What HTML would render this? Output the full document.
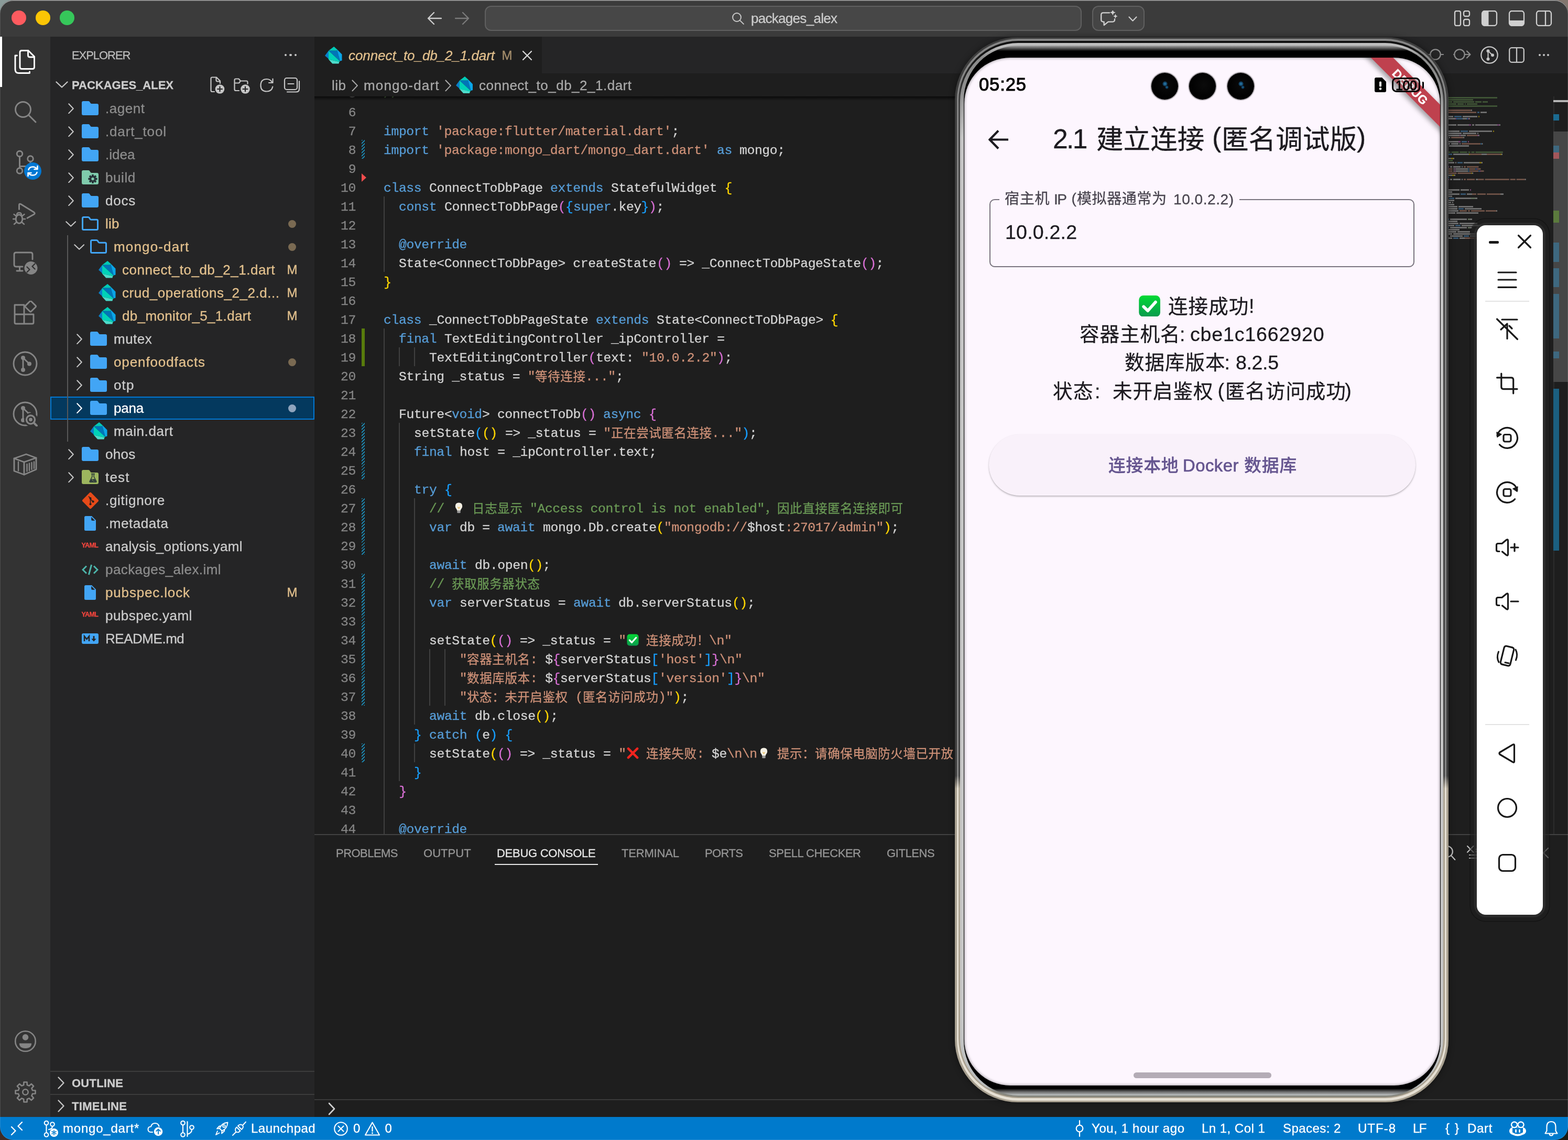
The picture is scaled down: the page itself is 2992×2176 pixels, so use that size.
<!DOCTYPE html><html><head><meta charset="utf-8"><title>packages_alex</title><style>
html,body{margin:0;padding:0;background:#1a1a1a;}
body{width:2992px;height:2176px;overflow:hidden;font-family:"Liberation Sans",sans-serif;}
#root{position:relative;width:2992px;height:2176px;overflow:hidden;background:#1e1e1e;}
#root div,#root span,#root svg{position:absolute;display:block;}
#root span{white-space:pre;-webkit-text-stroke:0.3px;}
#win,.ov{will-change:transform;}
#root svg.t{overflow:visible;}
#root svg.m{font-family:'Liberation Mono',monospace;}
#root text{fill:currentColor;stroke:currentColor;stroke-width:.3px;white-space:pre;}
#win{left:0;top:0;width:2992px;height:2176px;border-radius:25px 25px 25px 25px;overflow:hidden;}
#wbd{left:0;top:0;width:2992px;height:2176px;border-radius:25px;box-shadow:inset 0 0 0 1px rgba(255,255,255,0.13);}
#wtop{left:0;top:0;width:2992px;height:120px;border-radius:25px 25px 0 0;box-shadow:inset 0 1.6px 0 #a2a2a2;pointer-events:none;}
</style></head><body><div id="root"><div style="left:0;top:0;width:40px;height:40px;background:#8a9b99"></div><div style="left:2952px;top:0;width:40px;height:40px;background:#83766e"></div><div style="left:0;top:2136px;width:40px;height:40px;background:#3e2c26"></div><div style="left:2952px;top:2136px;width:40px;height:40px;background:#1a1a14"></div><div id="win"><div style="left:0px;top:0px;width:2992px;height:70px;background:#3b3b3b;"></div><div style="left:22.2px;top:20px;width:28px;height:28px;background:#fe5b5f;border-radius:50%;"></div><div style="left:68px;top:20px;width:28px;height:28px;background:#fbc505;border-radius:50%;"></div><div style="left:114px;top:20px;width:28px;height:28px;background:#36c75a;border-radius:50%;"></div><svg style="left:815px;top:22px;" width="28" height="26" viewBox="0 0 28 26"><path d="M13 2L2 13 13 24M2.5 13H27" fill="none" stroke="#cccccc" stroke-width="2.4" stroke-linecap="round" stroke-linejoin="round" /></svg><svg style="left:868px;top:22px;" width="28" height="26" viewBox="0 0 28 26"><path d="M15 2L26 13 15 24M25.5 13H1" fill="none" stroke="#7a7a7a" stroke-width="2.4" stroke-linecap="round" stroke-linejoin="round" /></svg><div style="left:925px;top:11px;width:1139px;height:48px;background:#474747;border:2px solid #606060;border-radius:12px;box-sizing:border-box;"></div><svg style="left:1396px;top:23px;" width="25" height="25" viewBox="0 0 30 30"><circle cx="12" cy="12" r="9.5" fill="none" stroke="#c8c8c8" stroke-width="2.4" stroke-linecap="round" stroke-linejoin="round" /><path d="M19 19L27.5 27.5" fill="none" stroke="#c8c8c8" stroke-width="2.4" stroke-linecap="round" stroke-linejoin="round" /></svg><svg class="t" style="left:1433px;top:17px;color:#cccccc;" width="165" height="36"><text y="27.01" font-size="26" textLength="165">packages_alex</text></svg><div style="left:2084px;top:11px;width:100px;height:48px;background:#454545;border:2px solid #606060;border-radius:12px;box-sizing:border-box;"></div><svg style="left:2099px;top:20px;" width="36" height="30" viewBox="0 0 36 30"><path d="M18 4.400H6.200Q2.200 4.400 2.200 8.400V17.600Q2.200 21.600 6.200 21.600H7.600V28L15.600 21.600H24Q28 21.600 28 17.600V16.500" fill="none" stroke="#d0d0d0" stroke-width="2.3" stroke-linecap="round" stroke-linejoin="round" /><path d="M24.3 -1.6000000000000005L25.92 2.1799999999999997 29.700000000000003 3.8 25.92 5.42 24.3 9.2 22.68 5.42 18.9 3.8 22.68 2.1799999999999997Z" fill="#d0d0d0"/><path d="M29.4 6.6L30.72 9.68 33.8 11 30.72 12.32 29.4 15.4 28.08 12.32 25.0 11 28.08 9.68Z" fill="#d0d0d0"/></svg><svg style="left:2151px;top:29.5px;" width="20" height="12" viewBox="0 0 20 12"><path d="M3.500 2.500L10.500 9.700 17.500 2.500" fill="none" stroke="#cccccc" stroke-width="2.2" stroke-linecap="round" stroke-linejoin="round" /></svg><svg style="left:2774px;top:20px;" width="32" height="30" viewBox="0 0 32 30"><rect x="2" y="1" width="11" height="28" rx="3" fill="none" stroke="#d0d0d0" stroke-width="2.3" stroke-linecap="round" stroke-linejoin="round" /><rect x="19" y="1" width="11" height="10" rx="3" fill="none" stroke="#d0d0d0" stroke-width="2.3" stroke-linecap="round" stroke-linejoin="round" /><rect x="19" y="17" width="11" height="12" rx="3" fill="none" stroke="#d0d0d0" stroke-width="2.3" stroke-linecap="round" stroke-linejoin="round" /></svg><svg style="left:2826px;top:20px;" width="32" height="30" viewBox="0 0 32 30"><rect x="2" y="1" width="28" height="28" rx="5" fill="none" stroke="#d0d0d0" stroke-width="2.3" stroke-linecap="round" stroke-linejoin="round" /><path d="M6.500 1H14.500V29H6.500Q2 29 2 24.500V5.500Q2 1 6.500 1Z" fill="#d0d0d0"/></svg><svg style="left:2878px;top:20px;" width="32" height="30" viewBox="0 0 32 30"><rect x="2" y="1" width="28" height="28" rx="5" fill="none" stroke="#d0d0d0" stroke-width="2.3" stroke-linecap="round" stroke-linejoin="round" /><path d="M2 19H30V24.500Q30 29 25.500 29H6.500Q2 29 2 24.500Z" fill="#d0d0d0"/></svg><svg style="left:2930px;top:20px;" width="32" height="30" viewBox="0 0 32 30"><rect x="2" y="1" width="28" height="28" rx="5" fill="none" stroke="#d0d0d0" stroke-width="2.3" stroke-linecap="round" stroke-linejoin="round" /><path d="M19 1V29" fill="none" stroke="#d0d0d0" stroke-width="2.3" stroke-linecap="round" stroke-linejoin="round" /></svg><div style="left:600px;top:70px;width:2392px;height:70px;background:#252526;"></div><div style="left:600px;top:70px;width:434px;height:70px;background:#1e1e1e;"></div><svg style="left:620px;top:89px;" width="32.5" height="32.5" viewBox="0 0 32.5 32.5"><path d="M17.2 0L23.5 5.5 23.4 7.8 7 7.8Z" fill="#01c9b6"/><path d="M7 7.7L0 17.2 6 22.5 7.1 24.8Z" fill="#0a7fc8"/><path d="M7 7.7L23.6 7.7 28.9 27 28.8 28Z" fill="#0175b8"/><path d="M23.5 5.5L32.5 14.7 32.5 26.4 29.3 27.5 28.8 27 23.5 7.7Z" fill="#0aa5e8"/><path d="M7 7.7L7 24.6 27.4 29.1 28.8 27.9Z" fill="#00d2b8"/><path d="M7 24.5L27.4 29 26.4 32.5 14.3 32.5Z" fill="#4ddccb"/></svg><svg class="t" style="left:665px;top:84px;color:#e2c08d;" width="279" height="44"><text y="31.01" font-size="26" textLength="279" font-style="italic">connect_to_db_2_1.dart</text></svg><span style="left:957.5px;top:84px;font-size:24px;line-height:44px;color:#a58e6c;">M</span><svg style="left:996px;top:96px;" width="20" height="20" viewBox="0 0 20 20"><path d="M2 2L18 18M18 2L2 18" fill="none" stroke="#d8d8d8" stroke-width="2.3" stroke-linecap="round" stroke-linejoin="round" /></svg><svg style="left:2719.3px;top:86px;" width="40" height="36" viewBox="0 0 40 36"><circle cx="20" cy="18" r="9.7" fill="none" stroke="#8c8c8c" stroke-width="2.2" stroke-linecap="round" stroke-linejoin="round" /><path d="M2 18H10.300M29.700 18H35" fill="none" stroke="#8c8c8c" stroke-width="2.2" stroke-linecap="round" stroke-linejoin="round" /></svg><svg style="left:2765px;top:86px;" width="44" height="36" viewBox="0 0 44 36"><circle cx="20" cy="18" r="9.7" fill="none" stroke="#8c8c8c" stroke-width="2.2" stroke-linecap="round" stroke-linejoin="round" /><path d="M9 18H10.300M29.700 18H40M34 11.500L40.500 18 34 24.500" fill="none" stroke="#8c8c8c" stroke-width="2.2" stroke-linecap="round" stroke-linejoin="round" /></svg><svg style="left:2821px;top:84px;" width="42" height="42" viewBox="0 0 42 42"><circle cx="21" cy="21" r="15.7" fill="none" stroke="#c5c5c5" stroke-width="2.2" stroke-linecap="round" stroke-linejoin="round" /><circle cx="18.500" cy="13.300" r="3" fill="#c5c5c5"/><circle cx="18.500" cy="28.700" r="3" fill="#c5c5c5"/><circle cx="27" cy="21.300" r="3" fill="#c5c5c5"/><path d="M18.500 13.300V28.700M18.500 13.300L27 21.300" fill="none" stroke="#c5c5c5" stroke-width="2" stroke-linecap="round" stroke-linejoin="round" /></svg><svg style="left:2878px;top:89px;" width="32" height="32" viewBox="0 0 32 32"><rect x="2.2" y="2.2" width="27.6" height="27.6" rx="4.500" fill="none" stroke="#c5c5c5" stroke-width="2.3" stroke-linecap="round" stroke-linejoin="round" /><path d="M16 2.200V29.800" fill="none" stroke="#c5c5c5" stroke-width="2.3" stroke-linecap="round" stroke-linejoin="round" /></svg><div style="left:2935.7px;top:102.7px;width:4.6px;height:4.6px;background:#c5c5c5;border-radius:50%;"></div><div style="left:2943.7px;top:102.7px;width:4.6px;height:4.6px;background:#c5c5c5;border-radius:50%;"></div><div style="left:2951.7px;top:102.7px;width:4.6px;height:4.6px;background:#c5c5c5;border-radius:50%;"></div><div style="left:600px;top:140px;width:2392px;height:1452px;background:#1e1e1e;"></div><svg class="t" style="left:632.5px;top:141px;color:#a9a9a9;" width="27" height="44"><text y="31.01" font-size="26" textLength="27">lib</text></svg><svg style="left:671px;top:152px;" width="12.35" height="22.8" viewBox="0 0 13 24"><path d="M1.5 1.5L11.5 12 1.5 22.5" fill="none" stroke="#a9a9a9" stroke-width="2.2" stroke-linecap="round" stroke-linejoin="round"  /></svg><svg class="t" style="left:693.5px;top:141px;color:#a9a9a9;" width="143.5" height="44"><text y="31.01" font-size="26" textLength="143.5">mongo-dart</text></svg><svg style="left:848.5px;top:152px;" width="12.35" height="22.8" viewBox="0 0 13 24"><path d="M1.5 1.5L11.5 12 1.5 22.5" fill="none" stroke="#a9a9a9" stroke-width="2.2" stroke-linecap="round" stroke-linejoin="round"  /></svg><svg style="left:870px;top:146px;" width="32" height="32" viewBox="0 0 32.5 32.5"><path d="M17.2 0L23.5 5.5 23.4 7.8 7 7.8Z" fill="#01c9b6"/><path d="M7 7.7L0 17.2 6 22.5 7.1 24.8Z" fill="#0a7fc8"/><path d="M7 7.7L23.6 7.7 28.9 27 28.8 28Z" fill="#0175b8"/><path d="M23.5 5.5L32.5 14.7 32.5 26.4 29.3 27.5 28.8 27 23.5 7.7Z" fill="#0aa5e8"/><path d="M7 7.7L7 24.6 27.4 29.1 28.8 27.9Z" fill="#00d2b8"/><path d="M7 24.5L27.4 29 26.4 32.5 14.3 32.5Z" fill="#4ddccb"/></svg><svg class="t" style="left:914px;top:141px;color:#a9a9a9;" width="291" height="44"><text y="31.01" font-size="26" textLength="291">connect_to_db_2_1.dart</text></svg><div style="left:600px;top:184px;width:2392px;height:1408px;overflow:hidden"><div style="left:-600px;top:-184px;width:2992px;height:2176px"><div style="left:690px;top:267px;width:6px;height:36px;background:repeating-linear-gradient(135deg,#1b81a8 0 2px,#1e1e1e 2px 4.2px);"></div><div style="left:690px;top:807px;width:6px;height:108px;background:repeating-linear-gradient(135deg,#1b81a8 0 2px,#1e1e1e 2px 4.2px);"></div><div style="left:690px;top:951px;width:6px;height:108px;background:repeating-linear-gradient(135deg,#1b81a8 0 2px,#1e1e1e 2px 4.2px);"></div><div style="left:690px;top:1095px;width:6px;height:252px;background:repeating-linear-gradient(135deg,#1b81a8 0 2px,#1e1e1e 2px 4.2px);"></div><div style="left:690px;top:1419px;width:6px;height:36px;background:repeating-linear-gradient(135deg,#1b81a8 0 2px,#1e1e1e 2px 4.2px);"></div><div style="left:690px;top:627px;width:6px;height:72px;background:#587c0c;"></div><svg style="left:690px;top:331px;" width="10" height="16" viewBox="0 0 10 16"><path d="M0 0L9 8 0 16Z" fill="#f14c4c"/></svg><div style="left:732px;top:375px;width:2px;height:144px;background:#404040;"></div><div style="left:732px;top:627px;width:2px;height:972px;background:#404040;"></div><div style="left:761px;top:663px;width:2px;height:36px;background:#404040;"></div><div style="left:790px;top:663px;width:2px;height:36px;background:#404040;"></div><div style="left:761px;top:807px;width:2px;height:684px;background:#404040;"></div><div style="left:790px;top:951px;width:2px;height:432px;background:#404040;"></div><div style="left:790px;top:1419px;width:2px;height:36px;background:#404040;"></div><div style="left:819px;top:1239px;width:2px;height:108px;background:#404040;"></div><div style="left:848px;top:1239px;width:2px;height:108px;background:#404040;"></div><span style="left:664.86px;top:160.5px;font-size:24.7px;line-height:36px;color:#858585;font-family:'Liberation Mono',monospace;">5</span><span style="left:664.86px;top:196.5px;font-size:24.7px;line-height:36px;color:#858585;font-family:'Liberation Mono',monospace;">6</span><span style="left:664.86px;top:232.5px;font-size:24.7px;line-height:36px;color:#858585;font-family:'Liberation Mono',monospace;">7</span><span style="left:664.86px;top:268.5px;font-size:24.7px;line-height:36px;color:#858585;font-family:'Liberation Mono',monospace;">8</span><span style="left:664.86px;top:304.5px;font-size:24.7px;line-height:36px;color:#858585;font-family:'Liberation Mono',monospace;">9</span><svg class="t m" style="left:650.41px;top:340.5px;color:#858585;" width="29.27" height="36"><text y="24.58" font-size="24.7" textLength="29.27">10</text></svg><svg class="t m" style="left:650.41px;top:376.5px;color:#858585;" width="29.27" height="36"><text y="24.58" font-size="24.7" textLength="29.27">11</text></svg><svg class="t m" style="left:650.41px;top:412.5px;color:#858585;" width="29.27" height="36"><text y="24.58" font-size="24.7" textLength="29.27">12</text></svg><svg class="t m" style="left:650.41px;top:448.5px;color:#858585;" width="29.27" height="36"><text y="24.58" font-size="24.7" textLength="29.27">13</text></svg><svg class="t m" style="left:650.41px;top:484.5px;color:#858585;" width="29.27" height="36"><text y="24.58" font-size="24.7" textLength="29.27">14</text></svg><svg class="t m" style="left:650.41px;top:520.5px;color:#858585;" width="29.27" height="36"><text y="24.58" font-size="24.7" textLength="29.27">15</text></svg><svg class="t m" style="left:650.41px;top:556.5px;color:#858585;" width="29.27" height="36"><text y="24.58" font-size="24.7" textLength="29.27">16</text></svg><svg class="t m" style="left:650.41px;top:592.5px;color:#858585;" width="29.27" height="36"><text y="24.58" font-size="24.7" textLength="29.27">17</text></svg><svg class="t m" style="left:650.41px;top:628.5px;color:#858585;" width="29.27" height="36"><text y="24.58" font-size="24.7" textLength="29.27">18</text></svg><svg class="t m" style="left:650.41px;top:664.5px;color:#858585;" width="29.27" height="36"><text y="24.58" font-size="24.7" textLength="29.27">19</text></svg><svg class="t m" style="left:650.41px;top:700.5px;color:#858585;" width="29.27" height="36"><text y="24.58" font-size="24.7" textLength="29.27">20</text></svg><svg class="t m" style="left:650.41px;top:736.5px;color:#858585;" width="29.27" height="36"><text y="24.58" font-size="24.7" textLength="29.27">21</text></svg><svg class="t m" style="left:650.41px;top:772.5px;color:#858585;" width="29.27" height="36"><text y="24.58" font-size="24.7" textLength="29.27">22</text></svg><svg class="t m" style="left:650.41px;top:808.5px;color:#858585;" width="29.27" height="36"><text y="24.58" font-size="24.7" textLength="29.27">23</text></svg><svg class="t m" style="left:650.41px;top:844.5px;color:#858585;" width="29.27" height="36"><text y="24.58" font-size="24.7" textLength="29.27">24</text></svg><svg class="t m" style="left:650.41px;top:880.5px;color:#858585;" width="29.27" height="36"><text y="24.58" font-size="24.7" textLength="29.27">25</text></svg><svg class="t m" style="left:650.41px;top:916.5px;color:#858585;" width="29.27" height="36"><text y="24.58" font-size="24.7" textLength="29.27">26</text></svg><svg class="t m" style="left:650.41px;top:952.5px;color:#858585;" width="29.27" height="36"><text y="24.58" font-size="24.7" textLength="29.27">27</text></svg><svg class="t m" style="left:650.41px;top:988.5px;color:#858585;" width="29.27" height="36"><text y="24.58" font-size="24.7" textLength="29.27">28</text></svg><svg class="t m" style="left:650.41px;top:1024.5px;color:#858585;" width="29.27" height="36"><text y="24.58" font-size="24.7" textLength="29.27">29</text></svg><svg class="t m" style="left:650.41px;top:1060.5px;color:#858585;" width="29.27" height="36"><text y="24.58" font-size="24.7" textLength="29.27">30</text></svg><svg class="t m" style="left:650.41px;top:1096.5px;color:#858585;" width="29.27" height="36"><text y="24.58" font-size="24.7" textLength="29.27">31</text></svg><svg class="t m" style="left:650.41px;top:1132.5px;color:#858585;" width="29.27" height="36"><text y="24.58" font-size="24.7" textLength="29.27">32</text></svg><svg class="t m" style="left:650.41px;top:1168.5px;color:#858585;" width="29.27" height="36"><text y="24.58" font-size="24.7" textLength="29.27">33</text></svg><svg class="t m" style="left:650.41px;top:1204.5px;color:#858585;" width="29.27" height="36"><text y="24.58" font-size="24.7" textLength="29.27">34</text></svg><svg class="t m" style="left:650.41px;top:1240.5px;color:#858585;" width="29.27" height="36"><text y="24.58" font-size="24.7" textLength="29.27">35</text></svg><svg class="t m" style="left:650.41px;top:1276.5px;color:#858585;" width="29.27" height="36"><text y="24.58" font-size="24.7" textLength="29.27">36</text></svg><svg class="t m" style="left:650.41px;top:1312.5px;color:#858585;" width="29.27" height="36"><text y="24.58" font-size="24.7" textLength="29.27">37</text></svg><svg class="t m" style="left:650.41px;top:1348.5px;color:#858585;" width="29.27" height="36"><text y="24.58" font-size="24.7" textLength="29.27">38</text></svg><svg class="t m" style="left:650.41px;top:1384.5px;color:#858585;" width="29.27" height="36"><text y="24.58" font-size="24.7" textLength="29.27">39</text></svg><svg class="t m" style="left:650.41px;top:1420.5px;color:#858585;" width="29.27" height="36"><text y="24.58" font-size="24.7" textLength="29.27">40</text></svg><svg class="t m" style="left:650.41px;top:1456.5px;color:#858585;" width="29.27" height="36"><text y="24.58" font-size="24.7" textLength="29.27">41</text></svg><svg class="t m" style="left:650.41px;top:1492.5px;color:#858585;" width="29.27" height="36"><text y="24.58" font-size="24.7" textLength="29.27">42</text></svg><svg class="t m" style="left:650.41px;top:1528.5px;color:#858585;" width="29.27" height="36"><text y="24.58" font-size="24.7" textLength="29.27">43</text></svg><svg class="t m" style="left:650.41px;top:1564.5px;color:#858585;" width="29.27" height="36"><text y="24.58" font-size="24.7" textLength="29.27">44</text></svg><svg class="t m" style="left:732.3px;top:160.5px;color:#6a9955;" width="910.72" height="36"><text y="24.58" font-size="24.7" textLength="910.72">// ============================================================</text></svg><svg class="t m" style="left:732.3px;top:232.5px;color:#569cd6;" width="87.07" height="36"><text y="24.58" font-size="24.7" textLength="87.07">import</text></svg><svg class="t m" style="left:833.45px;top:232.5px;color:#ce9178;" width="448.32" height="36"><text y="24.58" font-size="24.7" textLength="448.32">'package:flutter/material.dart'</text></svg><span style="left:1281.4px;top:232.5px;font-size:24.7px;line-height:36px;color:#d4d4d4;font-family:'Liberation Mono',monospace;">;</span><svg class="t m" style="left:732.3px;top:268.5px;color:#569cd6;" width="87.07" height="36"><text y="24.58" font-size="24.7" textLength="87.07">import</text></svg><svg class="t m" style="left:833.45px;top:268.5px;color:#ce9178;" width="520.57" height="36"><text y="24.58" font-size="24.7" textLength="520.57">'package:mongo_dart/mongo_dart.dart'</text></svg><svg class="t m" style="left:1368.1px;top:268.5px;color:#569cd6;" width="29.27" height="36"><text y="24.58" font-size="24.7" textLength="29.27">as</text></svg><svg class="t m" style="left:1411.45px;top:268.5px;color:#d4d4d4;" width="87.07" height="36"><text y="24.58" font-size="24.7" textLength="87.07">mongo;</text></svg><svg class="t m" style="left:732.3px;top:340.5px;color:#569cd6;" width="72.62" height="36"><text y="24.58" font-size="24.7" textLength="72.62">class</text></svg><svg class="t m" style="left:819px;top:340.5px;color:#d4d4d4;" width="217.12" height="36"><text y="24.58" font-size="24.7" textLength="217.12">ConnectToDbPage</text></svg><svg class="t m" style="left:1050.2px;top:340.5px;color:#569cd6;" width="101.52" height="36"><text y="24.58" font-size="24.7" textLength="101.52">extends</text></svg><svg class="t m" style="left:1165.8px;top:340.5px;color:#d4d4d4;" width="202.67" height="36"><text y="24.58" font-size="24.7" textLength="202.67">StatefulWidget</text></svg><span style="left:1382.55px;top:340.5px;font-size:24.7px;line-height:36px;color:#ffd700;font-family:'Liberation Mono',monospace;">{</span><svg class="t m" style="left:761.2px;top:376.5px;color:#569cd6;" width="72.62" height="36"><text y="24.58" font-size="24.7" textLength="72.62">const</text></svg><svg class="t m" style="left:847.9px;top:376.5px;color:#d4d4d4;" width="217.12" height="36"><text y="24.58" font-size="24.7" textLength="217.12">ConnectToDbPage</text></svg><span style="left:1064.65px;top:376.5px;font-size:24.7px;line-height:36px;color:#da70d6;font-family:'Liberation Mono',monospace;">(</span><span style="left:1079.1px;top:376.5px;font-size:24.7px;line-height:36px;color:#179fff;font-family:'Liberation Mono',monospace;">{</span><svg class="t m" style="left:1093.55px;top:376.5px;color:#569cd6;" width="72.62" height="36"><text y="24.58" font-size="24.7" textLength="72.62">super</text></svg><svg class="t m" style="left:1165.8px;top:376.5px;color:#d4d4d4;" width="58.17" height="36"><text y="24.58" font-size="24.7" textLength="58.17">.key</text></svg><span style="left:1223.6px;top:376.5px;font-size:24.7px;line-height:36px;color:#179fff;font-family:'Liberation Mono',monospace;">}</span><span style="left:1238.05px;top:376.5px;font-size:24.7px;line-height:36px;color:#da70d6;font-family:'Liberation Mono',monospace;">)</span><span style="left:1252.5px;top:376.5px;font-size:24.7px;line-height:36px;color:#d4d4d4;font-family:'Liberation Mono',monospace;">;</span><svg class="t m" style="left:761.2px;top:448.5px;color:#569cd6;" width="130.42" height="36"><text y="24.58" font-size="24.7" textLength="130.42">@override</text></svg><svg class="t m" style="left:761.2px;top:484.5px;color:#d4d4d4;" width="491.67" height="36"><text y="24.58" font-size="24.7" textLength="491.67">State&lt;ConnectToDbPage&gt; createState</text></svg><svg class="t m" style="left:1252.5px;top:484.5px;color:#da70d6;" width="29.27" height="36"><text y="24.58" font-size="24.7" textLength="29.27">()</text></svg><svg class="t m" style="left:1295.85px;top:484.5px;color:#d4d4d4;" width="347.17" height="36"><text y="24.58" font-size="24.7" textLength="347.17">=&gt; _ConnectToDbPageState</text></svg><svg class="t m" style="left:1642.65px;top:484.5px;color:#da70d6;" width="29.27" height="36"><text y="24.58" font-size="24.7" textLength="29.27">()</text></svg><span style="left:1671.55px;top:484.5px;font-size:24.7px;line-height:36px;color:#d4d4d4;font-family:'Liberation Mono',monospace;">;</span><span style="left:732.3px;top:520.5px;font-size:24.7px;line-height:36px;color:#ffd700;font-family:'Liberation Mono',monospace;">}</span><svg class="t m" style="left:732.3px;top:592.5px;color:#569cd6;" width="72.62" height="36"><text y="24.58" font-size="24.7" textLength="72.62">class</text></svg><svg class="t m" style="left:819px;top:592.5px;color:#d4d4d4;" width="303.82" height="36"><text y="24.58" font-size="24.7" textLength="303.82">_ConnectToDbPageState</text></svg><svg class="t m" style="left:1136.9px;top:592.5px;color:#569cd6;" width="101.52" height="36"><text y="24.58" font-size="24.7" textLength="101.52">extends</text></svg><svg class="t m" style="left:1252.5px;top:592.5px;color:#d4d4d4;" width="318.27" height="36"><text y="24.58" font-size="24.7" textLength="318.27">State&lt;ConnectToDbPage&gt;</text></svg><span style="left:1584.85px;top:592.5px;font-size:24.7px;line-height:36px;color:#ffd700;font-family:'Liberation Mono',monospace;">{</span><svg class="t m" style="left:761.2px;top:628.5px;color:#569cd6;" width="72.62" height="36"><text y="24.58" font-size="24.7" textLength="72.62">final</text></svg><svg class="t m" style="left:847.9px;top:628.5px;color:#d4d4d4;" width="535.02" height="36"><text y="24.58" font-size="24.7" textLength="535.02">TextEditingController _ipController =</text></svg><svg class="t m" style="left:819px;top:664.5px;color:#d4d4d4;" width="303.82" height="36"><text y="24.58" font-size="24.7" textLength="303.82">TextEditingController</text></svg><span style="left:1122.45px;top:664.5px;font-size:24.7px;line-height:36px;color:#da70d6;font-family:'Liberation Mono',monospace;">(</span><svg class="t m" style="left:1136.9px;top:664.5px;color:#d4d4d4;" width="72.62" height="36"><text y="24.58" font-size="24.7" textLength="72.62">text:</text></svg><svg class="t m" style="left:1223.6px;top:664.5px;color:#ce9178;" width="144.87" height="36"><text y="24.58" font-size="24.7" textLength="144.87">"10.0.2.2"</text></svg><span style="left:1368.1px;top:664.5px;font-size:24.7px;line-height:36px;color:#da70d6;font-family:'Liberation Mono',monospace;">)</span><span style="left:1382.55px;top:664.5px;font-size:24.7px;line-height:36px;color:#d4d4d4;font-family:'Liberation Mono',monospace;">;</span><svg class="t m" style="left:761.2px;top:700.5px;color:#d4d4d4;" width="231.57" height="36"><text y="24.58" font-size="24.7" textLength="231.57">String _status =</text></svg><span style="left:1006.85px;top:700.5px;font-size:24.7px;line-height:36px;color:#ce9178;font-family:'Liberation Mono',monospace;">"</span><svg class="t" style="left:1021.3px;top:702.93px;color:#ce9178;" width="100.7" height="30.55"><text y="23.5" font-size="23.5" textLength="96" font-family="'Liberation Mono','Noto Sans CJK SC',monospace">等待连接</text></svg><svg class="t m" style="left:1117.3px;top:700.5px;color:#ce9178;" width="58.17" height="36"><text y="24.58" font-size="24.7" textLength="58.17">..."</text></svg><span style="left:1175.1px;top:700.5px;font-size:24.7px;line-height:36px;color:#d4d4d4;font-family:'Liberation Mono',monospace;">;</span><svg class="t m" style="left:761.2px;top:772.5px;color:#d4d4d4;" width="101.52" height="36"><text y="24.58" font-size="24.7" textLength="101.52">Future&lt;</text></svg><svg class="t m" style="left:862.35px;top:772.5px;color:#569cd6;" width="58.17" height="36"><text y="24.58" font-size="24.7" textLength="58.17">void</text></svg><svg class="t m" style="left:920.15px;top:772.5px;color:#d4d4d4;" width="188.22" height="36"><text y="24.58" font-size="24.7" textLength="188.22">&gt; connectToDb</text></svg><svg class="t m" style="left:1108px;top:772.5px;color:#da70d6;" width="29.27" height="36"><text y="24.58" font-size="24.7" textLength="29.27">()</text></svg><svg class="t m" style="left:1151.35px;top:772.5px;color:#569cd6;" width="72.62" height="36"><text y="24.58" font-size="24.7" textLength="72.62">async</text></svg><span style="left:1238.05px;top:772.5px;font-size:24.7px;line-height:36px;color:#da70d6;font-family:'Liberation Mono',monospace;">{</span><svg class="t m" style="left:790.1px;top:808.5px;color:#d4d4d4;" width="115.97" height="36"><text y="24.58" font-size="24.7" textLength="115.97">setState</text></svg><span style="left:905.7px;top:808.5px;font-size:24.7px;line-height:36px;color:#179fff;font-family:'Liberation Mono',monospace;">(</span><svg class="t m" style="left:920.15px;top:808.5px;color:#ffd700;" width="29.27" height="36"><text y="24.58" font-size="24.7" textLength="29.27">()</text></svg><svg class="t m" style="left:963.5px;top:808.5px;color:#d4d4d4;" width="173.77" height="36"><text y="24.58" font-size="24.7" textLength="173.77">=&gt; _status =</text></svg><span style="left:1151.35px;top:808.5px;font-size:24.7px;line-height:36px;color:#ce9178;font-family:'Liberation Mono',monospace;">"</span><svg class="t" style="left:1165.8px;top:810.93px;color:#ce9178;" width="196.7" height="30.55"><text y="23.5" font-size="23.5" textLength="192" font-family="'Liberation Mono','Noto Sans CJK SC',monospace">正在尝试匿名连接</text></svg><svg class="t m" style="left:1357.8px;top:808.5px;color:#ce9178;" width="58.17" height="36"><text y="24.58" font-size="24.7" textLength="58.17">..."</text></svg><span style="left:1415.6px;top:808.5px;font-size:24.7px;line-height:36px;color:#179fff;font-family:'Liberation Mono',monospace;">)</span><span style="left:1430.05px;top:808.5px;font-size:24.7px;line-height:36px;color:#d4d4d4;font-family:'Liberation Mono',monospace;">;</span><svg class="t m" style="left:790.1px;top:844.5px;color:#569cd6;" width="72.62" height="36"><text y="24.58" font-size="24.7" textLength="72.62">final</text></svg><svg class="t m" style="left:876.8px;top:844.5px;color:#d4d4d4;" width="376.07" height="36"><text y="24.58" font-size="24.7" textLength="376.07">host = _ipController.text;</text></svg><svg class="t m" style="left:790.1px;top:916.5px;color:#569cd6;" width="43.72" height="36"><text y="24.58" font-size="24.7" textLength="43.72">try</text></svg><span style="left:847.9px;top:916.5px;font-size:24.7px;line-height:36px;color:#179fff;font-family:'Liberation Mono',monospace;">{</span><svg class="t m" style="left:819px;top:952.5px;color:#6a9955;" width="29.27" height="36"><text y="24.58" font-size="24.7" textLength="29.27">//</text></svg><svg style="left:863.85px;top:957.5px;" width="23" height="23" viewBox="0 0 24 24"><path d="M12 1.5Q19 1.5 19 8.5Q19 12 16.5 14.5Q15.5 15.5 15.5 17.500H8.5Q8.5 15.5 7.5 14.5Q5 12 5 8.5Q5 1.5 12 1.5Z" fill="#f4f0e4"/><path d="M10 10L12 13 14 10" fill="none" stroke="#e8b64a" stroke-width="1.2"/><rect x="8.7" y="17.5" width="6.6" height="4.8" rx="1.2" fill="#9a9a9a"/></svg><svg class="t" style="left:900.8px;top:954.93px;color:#6a9955;" width="100.7" height="30.55"><text y="23.5" font-size="23.5" textLength="96" font-family="'Liberation Mono','Noto Sans CJK SC',monospace">日志显示</text></svg><svg class="t m" style="left:1011.25px;top:952.5px;color:#6a9955;" width="448.32" height="36"><text y="24.58" font-size="24.7" textLength="448.32">"Access control is not enabled"</text></svg><svg class="t" style="left:1459.2px;top:954.93px;color:#6a9955;" width="268.7" height="30.55"><text y="23.5" font-size="23.5" textLength="264" font-family="'Liberation Mono','Noto Sans CJK SC',monospace">，因此直接匿名连接即可</text></svg><svg class="t m" style="left:819px;top:988.5px;color:#569cd6;" width="43.72" height="36"><text y="24.58" font-size="24.7" textLength="43.72">var</text></svg><svg class="t m" style="left:876.8px;top:988.5px;color:#d4d4d4;" width="58.17" height="36"><text y="24.58" font-size="24.7" textLength="58.17">db =</text></svg><svg class="t m" style="left:949.05px;top:988.5px;color:#569cd6;" width="72.62" height="36"><text y="24.58" font-size="24.7" textLength="72.62">await</text></svg><svg class="t m" style="left:1035.75px;top:988.5px;color:#d4d4d4;" width="217.12" height="36"><text y="24.58" font-size="24.7" textLength="217.12">mongo.Db.create</text></svg><span style="left:1252.5px;top:988.5px;font-size:24.7px;line-height:36px;color:#ffd700;font-family:'Liberation Mono',monospace;">(</span><svg class="t m" style="left:1266.95px;top:988.5px;color:#ce9178;" width="159.32" height="36"><text y="24.58" font-size="24.7" textLength="159.32">"mongodb://</text></svg><svg class="t m" style="left:1425.9px;top:988.5px;color:#d4d4d4;" width="72.62" height="36"><text y="24.58" font-size="24.7" textLength="72.62">$host</text></svg><svg class="t m" style="left:1498.15px;top:988.5px;color:#ce9178;" width="188.22" height="36"><text y="24.58" font-size="24.7" textLength="188.22">:27017/admin"</text></svg><span style="left:1686px;top:988.5px;font-size:24.7px;line-height:36px;color:#ffd700;font-family:'Liberation Mono',monospace;">)</span><span style="left:1700.45px;top:988.5px;font-size:24.7px;line-height:36px;color:#d4d4d4;font-family:'Liberation Mono',monospace;">;</span><svg class="t m" style="left:819px;top:1060.5px;color:#569cd6;" width="72.62" height="36"><text y="24.58" font-size="24.7" textLength="72.62">await</text></svg><svg class="t m" style="left:905.7px;top:1060.5px;color:#d4d4d4;" width="101.52" height="36"><text y="24.58" font-size="24.7" textLength="101.52">db.open</text></svg><svg class="t m" style="left:1006.85px;top:1060.5px;color:#ffd700;" width="29.27" height="36"><text y="24.58" font-size="24.7" textLength="29.27">()</text></svg><span style="left:1035.75px;top:1060.5px;font-size:24.7px;line-height:36px;color:#d4d4d4;font-family:'Liberation Mono',monospace;">;</span><svg class="t m" style="left:819px;top:1096.5px;color:#6a9955;" width="29.27" height="36"><text y="24.58" font-size="24.7" textLength="29.27">//</text></svg><svg class="t" style="left:862.35px;top:1098.93px;color:#6a9955;" width="172.7" height="30.55"><text y="23.5" font-size="23.5" textLength="168" font-family="'Liberation Mono','Noto Sans CJK SC',monospace">获取服务器状态</text></svg><svg class="t m" style="left:819px;top:1132.5px;color:#569cd6;" width="43.72" height="36"><text y="24.58" font-size="24.7" textLength="43.72">var</text></svg><svg class="t m" style="left:876.8px;top:1132.5px;color:#d4d4d4;" width="202.67" height="36"><text y="24.58" font-size="24.7" textLength="202.67">serverStatus =</text></svg><svg class="t m" style="left:1093.55px;top:1132.5px;color:#569cd6;" width="72.62" height="36"><text y="24.58" font-size="24.7" textLength="72.62">await</text></svg><svg class="t m" style="left:1180.25px;top:1132.5px;color:#d4d4d4;" width="217.12" height="36"><text y="24.58" font-size="24.7" textLength="217.12">db.serverStatus</text></svg><svg class="t m" style="left:1397px;top:1132.5px;color:#ffd700;" width="29.27" height="36"><text y="24.58" font-size="24.7" textLength="29.27">()</text></svg><span style="left:1425.9px;top:1132.5px;font-size:24.7px;line-height:36px;color:#d4d4d4;font-family:'Liberation Mono',monospace;">;</span><svg class="t m" style="left:819px;top:1204.5px;color:#d4d4d4;" width="115.97" height="36"><text y="24.58" font-size="24.7" textLength="115.97">setState</text></svg><span style="left:934.6px;top:1204.5px;font-size:24.7px;line-height:36px;color:#ffd700;font-family:'Liberation Mono',monospace;">(</span><svg class="t m" style="left:949.05px;top:1204.5px;color:#da70d6;" width="29.27" height="36"><text y="24.58" font-size="24.7" textLength="29.27">()</text></svg><svg class="t m" style="left:992.4px;top:1204.5px;color:#d4d4d4;" width="173.77" height="36"><text y="24.58" font-size="24.7" textLength="173.77">=&gt; _status =</text></svg><span style="left:1180.25px;top:1204.5px;font-size:24.7px;line-height:36px;color:#ce9178;font-family:'Liberation Mono',monospace;">"</span><svg style="left:1196.2px;top:1209.5px;" width="23" height="23" viewBox="0 0 24 24"><defs><linearGradient id="gck" x1="0" y1="0" x2="0" y2="1"><stop offset="0" stop-color="#04d735"/><stop offset="1" stop-color="#0b9a4d"/></linearGradient></defs><rect x="0.5" y="0.5" width="23" height="23" rx="5" fill="url(#gck)"/><path d="M5.5 12.5L10 17 18.5 7.5" fill="none" stroke="#fff" stroke-width="3.3" stroke-linecap="round" stroke-linejoin="round"/></svg><svg class="t" style="left:1233.15px;top:1206.93px;color:#ce9178;" width="124.7" height="30.55"><text y="23.5" font-size="23.5" textLength="120" font-family="'Liberation Mono','Noto Sans CJK SC',monospace">连接成功！</text></svg><svg class="t m" style="left:1353.15px;top:1204.5px;color:#ce9178;" width="43.72" height="36"><text y="24.58" font-size="24.7" textLength="43.72">\n"</text></svg><span style="left:876.8px;top:1240.5px;font-size:24.7px;line-height:36px;color:#ce9178;font-family:'Liberation Mono',monospace;">"</span><svg class="t" style="left:891.25px;top:1242.93px;color:#ce9178;" width="124.7" height="30.55"><text y="23.5" font-size="23.5" textLength="120" font-family="'Liberation Mono','Noto Sans CJK SC',monospace">容器主机名</text></svg><span style="left:1011.25px;top:1240.5px;font-size:24.7px;line-height:36px;color:#ce9178;font-family:'Liberation Mono',monospace;">:</span><span style="left:1040.15px;top:1240.5px;font-size:24.7px;line-height:36px;color:#d4d4d4;font-family:'Liberation Mono',monospace;">$</span><span style="left:1054.6px;top:1240.5px;font-size:24.7px;line-height:36px;color:#da70d6;font-family:'Liberation Mono',monospace;">{</span><svg class="t m" style="left:1069.05px;top:1240.5px;color:#d4d4d4;" width="173.77" height="36"><text y="24.58" font-size="24.7" textLength="173.77">serverStatus</text></svg><span style="left:1242.45px;top:1240.5px;font-size:24.7px;line-height:36px;color:#179fff;font-family:'Liberation Mono',monospace;">[</span><svg class="t m" style="left:1256.9px;top:1240.5px;color:#ce9178;" width="87.07" height="36"><text y="24.58" font-size="24.7" textLength="87.07">'host'</text></svg><span style="left:1343.6px;top:1240.5px;font-size:24.7px;line-height:36px;color:#179fff;font-family:'Liberation Mono',monospace;">]</span><span style="left:1358.05px;top:1240.5px;font-size:24.7px;line-height:36px;color:#da70d6;font-family:'Liberation Mono',monospace;">}</span><svg class="t m" style="left:1372.5px;top:1240.5px;color:#ce9178;" width="43.72" height="36"><text y="24.58" font-size="24.7" textLength="43.72">\n"</text></svg><span style="left:876.8px;top:1276.5px;font-size:24.7px;line-height:36px;color:#ce9178;font-family:'Liberation Mono',monospace;">"</span><svg class="t" style="left:891.25px;top:1278.93px;color:#ce9178;" width="124.7" height="30.55"><text y="23.5" font-size="23.5" textLength="120" font-family="'Liberation Mono','Noto Sans CJK SC',monospace">数据库版本</text></svg><span style="left:1011.25px;top:1276.5px;font-size:24.7px;line-height:36px;color:#ce9178;font-family:'Liberation Mono',monospace;">:</span><span style="left:1040.15px;top:1276.5px;font-size:24.7px;line-height:36px;color:#d4d4d4;font-family:'Liberation Mono',monospace;">$</span><span style="left:1054.6px;top:1276.5px;font-size:24.7px;line-height:36px;color:#da70d6;font-family:'Liberation Mono',monospace;">{</span><svg class="t m" style="left:1069.05px;top:1276.5px;color:#d4d4d4;" width="173.77" height="36"><text y="24.58" font-size="24.7" textLength="173.77">serverStatus</text></svg><span style="left:1242.45px;top:1276.5px;font-size:24.7px;line-height:36px;color:#179fff;font-family:'Liberation Mono',monospace;">[</span><svg class="t m" style="left:1256.9px;top:1276.5px;color:#ce9178;" width="130.42" height="36"><text y="24.58" font-size="24.7" textLength="130.42">'version'</text></svg><span style="left:1386.95px;top:1276.5px;font-size:24.7px;line-height:36px;color:#179fff;font-family:'Liberation Mono',monospace;">]</span><span style="left:1401.4px;top:1276.5px;font-size:24.7px;line-height:36px;color:#da70d6;font-family:'Liberation Mono',monospace;">}</span><svg class="t m" style="left:1415.85px;top:1276.5px;color:#ce9178;" width="43.72" height="36"><text y="24.58" font-size="24.7" textLength="43.72">\n"</text></svg><span style="left:876.8px;top:1312.5px;font-size:24.7px;line-height:36px;color:#ce9178;font-family:'Liberation Mono',monospace;">"</span><svg class="t" style="left:891.25px;top:1314.93px;color:#ce9178;" width="196.7" height="30.55"><text y="23.5" font-size="23.5" textLength="192" font-family="'Liberation Mono','Noto Sans CJK SC',monospace">状态：未开启鉴权</text></svg><span style="left:1097.7px;top:1312.5px;font-size:24.7px;line-height:36px;color:#ce9178;font-family:'Liberation Mono',monospace;">(</span><svg class="t" style="left:1112.15px;top:1314.93px;color:#ce9178;" width="148.7" height="30.55"><text y="23.5" font-size="23.5" textLength="144" font-family="'Liberation Mono','Noto Sans CJK SC',monospace">匿名访问成功</text></svg><svg class="t m" style="left:1256.15px;top:1312.5px;color:#ce9178;" width="29.27" height="36"><text y="24.58" font-size="24.7" textLength="29.27">)"</text></svg><span style="left:1285.05px;top:1312.5px;font-size:24.7px;line-height:36px;color:#ffd700;font-family:'Liberation Mono',monospace;">)</span><span style="left:1299.5px;top:1312.5px;font-size:24.7px;line-height:36px;color:#d4d4d4;font-family:'Liberation Mono',monospace;">;</span><svg class="t m" style="left:819px;top:1348.5px;color:#569cd6;" width="72.62" height="36"><text y="24.58" font-size="24.7" textLength="72.62">await</text></svg><svg class="t m" style="left:905.7px;top:1348.5px;color:#d4d4d4;" width="115.97" height="36"><text y="24.58" font-size="24.7" textLength="115.97">db.close</text></svg><svg class="t m" style="left:1021.3px;top:1348.5px;color:#ffd700;" width="29.27" height="36"><text y="24.58" font-size="24.7" textLength="29.27">()</text></svg><span style="left:1050.2px;top:1348.5px;font-size:24.7px;line-height:36px;color:#d4d4d4;font-family:'Liberation Mono',monospace;">;</span><span style="left:790.1px;top:1384.5px;font-size:24.7px;line-height:36px;color:#179fff;font-family:'Liberation Mono',monospace;">}</span><svg class="t m" style="left:819px;top:1384.5px;color:#569cd6;" width="72.62" height="36"><text y="24.58" font-size="24.7" textLength="72.62">catch</text></svg><span style="left:905.7px;top:1384.5px;font-size:24.7px;line-height:36px;color:#179fff;font-family:'Liberation Mono',monospace;">(</span><span style="left:920.15px;top:1384.5px;font-size:24.7px;line-height:36px;color:#d4d4d4;font-family:'Liberation Mono',monospace;">e</span><span style="left:934.6px;top:1384.5px;font-size:24.7px;line-height:36px;color:#179fff;font-family:'Liberation Mono',monospace;">)</span><span style="left:963.5px;top:1384.5px;font-size:24.7px;line-height:36px;color:#179fff;font-family:'Liberation Mono',monospace;">{</span><svg class="t m" style="left:819px;top:1420.5px;color:#d4d4d4;" width="115.97" height="36"><text y="24.58" font-size="24.7" textLength="115.97">setState</text></svg><span style="left:934.6px;top:1420.5px;font-size:24.7px;line-height:36px;color:#ffd700;font-family:'Liberation Mono',monospace;">(</span><svg class="t m" style="left:949.05px;top:1420.5px;color:#da70d6;" width="29.27" height="36"><text y="24.58" font-size="24.7" textLength="29.27">()</text></svg><svg class="t m" style="left:992.4px;top:1420.5px;color:#d4d4d4;" width="173.77" height="36"><text y="24.58" font-size="24.7" textLength="173.77">=&gt; _status =</text></svg><span style="left:1180.25px;top:1420.5px;font-size:24.7px;line-height:36px;color:#ce9178;font-family:'Liberation Mono',monospace;">"</span><svg style="left:1196.2px;top:1425.5px;" width="23" height="23" viewBox="0 0 24 24"><path d="M3 3L21 21M21 3L3 21" fill="none" stroke="#f2241f" stroke-width="4.6" stroke-linecap="round"/></svg><svg class="t" style="left:1233.15px;top:1422.93px;color:#ce9178;" width="100.7" height="30.55"><text y="23.5" font-size="23.5" textLength="96" font-family="'Liberation Mono','Noto Sans CJK SC',monospace">连接失败</text></svg><span style="left:1329.15px;top:1420.5px;font-size:24.7px;line-height:36px;color:#ce9178;font-family:'Liberation Mono',monospace;">:</span><svg class="t m" style="left:1358.05px;top:1420.5px;color:#d4d4d4;" width="29.27" height="36"><text y="24.58" font-size="24.7" textLength="29.27">$e</text></svg><svg class="t m" style="left:1386.95px;top:1420.5px;color:#ce9178;" width="58.17" height="36"><text y="24.58" font-size="24.7" textLength="58.17">\n\n</text></svg><svg style="left:1446.25px;top:1425.5px;" width="23" height="23" viewBox="0 0 24 24"><path d="M12 1.5Q19 1.5 19 8.5Q19 12 16.5 14.5Q15.5 15.5 15.5 17.500H8.5Q8.5 15.5 7.5 14.5Q5 12 5 8.5Q5 1.5 12 1.5Z" fill="#f4f0e4"/><path d="M10 10L12 13 14 10" fill="none" stroke="#e8b64a" stroke-width="1.2"/><rect x="8.7" y="17.5" width="6.6" height="4.8" rx="1.2" fill="#9a9a9a"/></svg><svg class="t" style="left:1483.2px;top:1422.93px;color:#ce9178;" width="340.7" height="30.55"><text y="23.5" font-size="23.5" textLength="336" font-family="'Liberation Mono','Noto Sans CJK SC',monospace">提示：请确保电脑防火墙已开放</text></svg><span style="left:790.1px;top:1456.5px;font-size:24.7px;line-height:36px;color:#179fff;font-family:'Liberation Mono',monospace;">}</span><span style="left:761.2px;top:1492.5px;font-size:24.7px;line-height:36px;color:#da70d6;font-family:'Liberation Mono',monospace;">}</span><svg class="t m" style="left:761.2px;top:1564.5px;color:#569cd6;" width="130.42" height="36"><text y="24.58" font-size="24.7" textLength="130.42">@override</text></svg></div></div><div style="left:600px;top:184px;width:2131px;height:8px;background:linear-gradient(#000000aa,#00000000);"></div><svg style="left:0;top:0" width="2992" height="2176"><g opacity="0.5"><rect x="2737" y="185.3" width="120" height="2.5" fill="#6a9955"/><rect x="2737" y="189.3" width="74" height="2.5" fill="#6a9955"/><rect x="2763" y="193.3" width="8" height="2.5" fill="#6a9955"/><rect x="2773" y="193.3" width="40" height="2.5" fill="#6a9955"/><rect x="2815" y="193.3" width="12" height="2.5" fill="#6a9955"/><rect x="2829" y="193.3" width="10" height="2.5" fill="#6a9955"/><rect x="2757" y="197.3" width="22" height="2.5" fill="#6a9955"/><rect x="2781" y="197.3" width="12" height="2.5" fill="#6a9955"/><rect x="2795" y="197.3" width="2" height="2.5" fill="#6a9955"/><rect x="2799" y="197.3" width="20" height="2.5" fill="#6a9955"/><rect x="2737" y="201.3" width="120" height="2.5" fill="#6a9955"/><rect x="2745" y="209.3" width="62" height="2.5" fill="#ce9178"/><rect x="2807" y="209.3" width="2" height="2.5" fill="#d4d4d4"/><rect x="2745" y="213.3" width="72" height="2.5" fill="#ce9178"/><rect x="2819" y="213.3" width="4" height="2.5" fill="#569cd6"/><rect x="2825" y="213.3" width="12" height="2.5" fill="#d4d4d4"/><rect x="2743" y="221.3" width="30" height="2.5" fill="#d4d4d4"/><rect x="2775" y="221.3" width="14" height="2.5" fill="#569cd6"/><rect x="2791" y="221.3" width="28" height="2.5" fill="#d4d4d4"/><rect x="2821" y="221.3" width="2" height="2.5" fill="#ffd700"/><rect x="2747" y="225.3" width="30" height="2.5" fill="#d4d4d4"/><rect x="2777" y="225.3" width="2" height="2.5" fill="#da70d6"/><rect x="2779" y="225.3" width="2" height="2.5" fill="#179fff"/><rect x="2781" y="225.3" width="10" height="2.5" fill="#569cd6"/><rect x="2791" y="225.3" width="8" height="2.5" fill="#d4d4d4"/><rect x="2799" y="225.3" width="2" height="2.5" fill="#179fff"/><rect x="2801" y="225.3" width="2" height="2.5" fill="#da70d6"/><rect x="2803" y="225.3" width="2" height="2.5" fill="#d4d4d4"/><rect x="2735" y="237.3" width="44" height="2.5" fill="#d4d4d4"/><rect x="2781" y="237.3" width="22" height="2.5" fill="#d4d4d4"/><rect x="2803" y="237.3" width="4" height="2.5" fill="#da70d6"/><rect x="2809" y="237.3" width="4" height="2.5" fill="#d4d4d4"/><rect x="2815" y="237.3" width="42" height="2.5" fill="#d4d4d4"/><rect x="2857" y="237.3" width="4" height="2.5" fill="#da70d6"/><rect x="2861" y="237.3" width="2" height="2.5" fill="#d4d4d4"/><rect x="2743" y="249.3" width="42" height="2.5" fill="#d4d4d4"/><rect x="2787" y="249.3" width="14" height="2.5" fill="#569cd6"/><rect x="2803" y="249.3" width="44" height="2.5" fill="#d4d4d4"/><rect x="2849" y="249.3" width="2" height="2.5" fill="#ffd700"/><rect x="2747" y="253.3" width="42" height="2.5" fill="#d4d4d4"/><rect x="2791" y="253.3" width="26" height="2.5" fill="#d4d4d4"/><rect x="2819" y="253.3" width="2" height="2.5" fill="#d4d4d4"/><rect x="2743" y="257.3" width="42" height="2.5" fill="#d4d4d4"/><rect x="2785" y="257.3" width="2" height="2.5" fill="#da70d6"/><rect x="2787" y="257.3" width="10" height="2.5" fill="#d4d4d4"/><rect x="2799" y="257.3" width="20" height="2.5" fill="#ce9178"/><rect x="2819" y="257.3" width="2" height="2.5" fill="#da70d6"/><rect x="2821" y="257.3" width="2" height="2.5" fill="#d4d4d4"/><rect x="2749" y="261.3" width="14" height="2.5" fill="#d4d4d4"/><rect x="2765" y="261.3" width="2" height="2.5" fill="#d4d4d4"/><rect x="2769" y="261.3" width="23.2" height="2.5" fill="#ce9178"/><rect x="2792.2" y="261.3" width="2" height="2.5" fill="#d4d4d4"/><rect x="2761" y="269.3" width="22" height="2.5" fill="#d4d4d4"/><rect x="2783" y="269.3" width="4" height="2.5" fill="#da70d6"/><rect x="2789" y="269.3" width="10" height="2.5" fill="#569cd6"/><rect x="2801" y="269.3" width="2" height="2.5" fill="#da70d6"/><rect x="2763" y="273.3" width="4" height="2.5" fill="#d4d4d4"/><rect x="2769" y="273.3" width="14" height="2.5" fill="#d4d4d4"/><rect x="2785" y="273.3" width="2" height="2.5" fill="#d4d4d4"/><rect x="2789" y="273.3" width="36.4" height="2.5" fill="#ce9178"/><rect x="2825.4" y="273.3" width="2" height="2.5" fill="#179fff"/><rect x="2827.4" y="273.3" width="2" height="2.5" fill="#d4d4d4"/><rect x="2761" y="277.3" width="2" height="2.5" fill="#d4d4d4"/><rect x="2765" y="277.3" width="38" height="2.5" fill="#d4d4d4"/><rect x="2754.3" y="289.3" width="13.2" height="2.5" fill="#6a9955"/><rect x="2769.5" y="289.3" width="14" height="2.5" fill="#6a9955"/><rect x="2785.5" y="289.3" width="14" height="2.5" fill="#6a9955"/><rect x="2801.5" y="289.3" width="4" height="2.5" fill="#6a9955"/><rect x="2807.5" y="289.3" width="6" height="2.5" fill="#6a9955"/><rect x="2815.5" y="289.3" width="52.3" height="2.5" fill="#6a9955"/><rect x="2761" y="293.3" width="10" height="2.5" fill="#569cd6"/><rect x="2773" y="293.3" width="30" height="2.5" fill="#d4d4d4"/><rect x="2803" y="293.3" width="2" height="2.5" fill="#ffd700"/><rect x="2805" y="293.3" width="22" height="2.5" fill="#ce9178"/><rect x="2827" y="293.3" width="10" height="2.5" fill="#d4d4d4"/><rect x="2837" y="293.3" width="26" height="2.5" fill="#ce9178"/><rect x="2863" y="293.3" width="2" height="2.5" fill="#ffd700"/><rect x="2865" y="293.3" width="2" height="2.5" fill="#d4d4d4"/><rect x="2755" y="301.3" width="14" height="2.5" fill="#d4d4d4"/><rect x="2769" y="301.3" width="4" height="2.5" fill="#ffd700"/><rect x="2773" y="301.3" width="2" height="2.5" fill="#d4d4d4"/><rect x="2749" y="305.3" width="23.1" height="2.5" fill="#6a9955"/><rect x="2751" y="309.3" width="24" height="2.5" fill="#d4d4d4"/><rect x="2777" y="309.3" width="2" height="2.5" fill="#d4d4d4"/><rect x="2781" y="309.3" width="10" height="2.5" fill="#569cd6"/><rect x="2793" y="309.3" width="30" height="2.5" fill="#d4d4d4"/><rect x="2823" y="309.3" width="4" height="2.5" fill="#ffd700"/><rect x="2827" y="309.3" width="2" height="2.5" fill="#d4d4d4"/><rect x="2761" y="317.3" width="4" height="2.5" fill="#da70d6"/><rect x="2767" y="317.3" width="4" height="2.5" fill="#d4d4d4"/><rect x="2773" y="317.3" width="14" height="2.5" fill="#d4d4d4"/><rect x="2789" y="317.3" width="2" height="2.5" fill="#d4d4d4"/><rect x="2793" y="317.3" width="4" height="2.5" fill="#ce9178"/><rect x="2799" y="317.3" width="22.5" height="2.5" fill="#ce9178"/><rect x="2751" y="321.3" width="20.5" height="2.5" fill="#ce9178"/><rect x="2773.5" y="321.3" width="2" height="2.5" fill="#d4d4d4"/><rect x="2775.5" y="321.3" width="2" height="2.5" fill="#da70d6"/><rect x="2777.5" y="321.3" width="24" height="2.5" fill="#d4d4d4"/><rect x="2801.5" y="321.3" width="2" height="2.5" fill="#179fff"/><rect x="2803.5" y="321.3" width="12" height="2.5" fill="#ce9178"/><rect x="2815.5" y="321.3" width="2" height="2.5" fill="#179fff"/><rect x="2817.5" y="321.3" width="2" height="2.5" fill="#da70d6"/><rect x="2819.5" y="321.3" width="6" height="2.5" fill="#ce9178"/><rect x="2751" y="325.3" width="20.5" height="2.5" fill="#ce9178"/><rect x="2773.5" y="325.3" width="2" height="2.5" fill="#d4d4d4"/><rect x="2775.5" y="325.3" width="2" height="2.5" fill="#da70d6"/><rect x="2777.5" y="325.3" width="24" height="2.5" fill="#d4d4d4"/><rect x="2801.5" y="325.3" width="2" height="2.5" fill="#179fff"/><rect x="2803.5" y="325.3" width="18" height="2.5" fill="#ce9178"/><rect x="2821.5" y="325.3" width="2" height="2.5" fill="#179fff"/><rect x="2823.5" y="325.3" width="2" height="2.5" fill="#da70d6"/><rect x="2825.5" y="325.3" width="6" height="2.5" fill="#ce9178"/><rect x="2751" y="329.3" width="28.4" height="2.5" fill="#ce9178"/><rect x="2781.4" y="329.3" width="25.8" height="2.5" fill="#ce9178"/><rect x="2807.2" y="329.3" width="2" height="2.5" fill="#ffd700"/><rect x="2809.2" y="329.3" width="2" height="2.5" fill="#d4d4d4"/><rect x="2755" y="333.3" width="16" height="2.5" fill="#d4d4d4"/><rect x="2771" y="333.3" width="4" height="2.5" fill="#ffd700"/><rect x="2775" y="333.3" width="2" height="2.5" fill="#d4d4d4"/><rect x="2763" y="337.3" width="2" height="2.5" fill="#179fff"/><rect x="2761" y="341.3" width="4" height="2.5" fill="#da70d6"/><rect x="2767" y="341.3" width="4" height="2.5" fill="#d4d4d4"/><rect x="2773" y="341.3" width="14" height="2.5" fill="#d4d4d4"/><rect x="2789" y="341.3" width="2" height="2.5" fill="#d4d4d4"/><rect x="2793" y="341.3" width="4" height="2.5" fill="#ce9178"/><rect x="2799" y="341.3" width="15.2" height="2.5" fill="#ce9178"/><rect x="2816.2" y="341.3" width="4" height="2.5" fill="#d4d4d4"/><rect x="2820.2" y="341.3" width="11.3" height="2.5" fill="#ce9178"/><rect x="2833.5" y="341.3" width="46.2" height="2.5" fill="#ce9178"/><rect x="2881.7" y="341.3" width="10" height="2.5" fill="#ce9178"/><rect x="2893.7" y="341.3" width="16" height="2.5" fill="#ce9178"/><rect x="2909.7" y="341.3" width="2" height="2.5" fill="#d4d4d4"/><rect x="2749" y="361.3" width="36" height="2.5" fill="#d4d4d4"/><rect x="2787" y="361.3" width="16" height="2.5" fill="#d4d4d4"/><rect x="2805" y="361.3" width="2" height="2.5" fill="#da70d6"/><rect x="2753" y="365.3" width="18" height="2.5" fill="#d4d4d4"/><rect x="2759" y="369.3" width="26" height="2.5" fill="#d4d4d4"/><rect x="2787" y="369.3" width="10" height="2.5" fill="#569cd6"/><rect x="2799" y="369.3" width="10" height="2.5" fill="#d4d4d4"/><rect x="2809" y="369.3" width="8" height="2.5" fill="#ce9178"/><rect x="2819" y="369.3" width="16" height="2.5" fill="#ce9178"/><rect x="2837" y="369.3" width="26" height="2.5" fill="#ce9178"/><rect x="2863" y="369.3" width="6" height="2.5" fill="#d4d4d4"/><rect x="2755" y="373.3" width="16" height="2.5" fill="#d4d4d4"/><rect x="2747" y="377.3" width="16" height="2.5" fill="#d4d4d4"/><rect x="2765" y="377.3" width="10" height="2.5" fill="#569cd6"/><rect x="2777" y="377.3" width="30" height="2.5" fill="#d4d4d4"/><rect x="2807" y="377.3" width="8" height="2.5" fill="#b5cea8"/><rect x="2815" y="377.3" width="4" height="2.5" fill="#d4d4d4"/><rect x="2761" y="381.3" width="14" height="2.5" fill="#d4d4d4"/><rect x="2751" y="385.3" width="18" height="2.5" fill="#d4d4d4"/><rect x="2771" y="385.3" width="2" height="2.5" fill="#d4d4d4"/><rect x="2755" y="389.3" width="20" height="2.5" fill="#d4d4d4"/><rect x="2759" y="393.3" width="22" height="2.5" fill="#d4d4d4"/><rect x="2783" y="393.3" width="28" height="2.5" fill="#d4d4d4"/><rect x="2759" y="397.3" width="22" height="2.5" fill="#d4d4d4"/><rect x="2783" y="397.3" width="10" height="2.5" fill="#569cd6"/><rect x="2795" y="397.3" width="32" height="2.5" fill="#d4d4d4"/><rect x="2763" y="401.3" width="20" height="2.5" fill="#d4d4d4"/><rect x="2785" y="401.3" width="14" height="2.5" fill="#ce9178"/><rect x="2801" y="401.3" width="4" height="2.5" fill="#ce9178"/><rect x="2807" y="401.3" width="26" height="2.5" fill="#ce9178"/><rect x="2835" y="401.3" width="20" height="2.5" fill="#ce9178"/><rect x="2855" y="401.3" width="2" height="2.5" fill="#d4d4d4"/><rect x="2763" y="405.3" width="14" height="2.5" fill="#d4d4d4"/><rect x="2779" y="405.3" width="42" height="2.5" fill="#d4d4d4"/><rect x="2759" y="409.3" width="4" height="2.5" fill="#d4d4d4"/><rect x="2755" y="417.3" width="10" height="2.5" fill="#569cd6"/><rect x="2767" y="417.3" width="32" height="2.5" fill="#d4d4d4"/><rect x="2801" y="417.3" width="4" height="2.5" fill="#b5cea8"/><rect x="2805" y="417.3" width="4" height="2.5" fill="#d4d4d4"/><rect x="2755" y="421.3" width="26" height="2.5" fill="#d4d4d4"/><rect x="2763" y="425.3" width="20" height="2.5" fill="#d4d4d4"/><rect x="2785" y="425.3" width="34" height="2.5" fill="#d4d4d4"/><rect x="2763" y="429.3" width="12" height="2.5" fill="#d4d4d4"/><rect x="2777" y="429.3" width="10" height="2.5" fill="#569cd6"/><rect x="2789" y="429.3" width="38" height="2.5" fill="#d4d4d4"/><rect x="2829" y="429.3" width="4" height="2.5" fill="#b5cea8"/><rect x="2833" y="429.3" width="6" height="2.5" fill="#d4d4d4"/><rect x="2755" y="433.3" width="10" height="2.5" fill="#569cd6"/><rect x="2767" y="433.3" width="32" height="2.5" fill="#d4d4d4"/><rect x="2801" y="433.3" width="4" height="2.5" fill="#b5cea8"/><rect x="2805" y="433.3" width="4" height="2.5" fill="#d4d4d4"/><rect x="2755" y="437.3" width="30" height="2.5" fill="#d4d4d4"/><rect x="2759" y="441.3" width="20" height="2.5" fill="#d4d4d4"/><rect x="2781" y="441.3" width="24" height="2.5" fill="#d4d4d4"/><rect x="2759" y="445.3" width="12" height="2.5" fill="#d4d4d4"/><rect x="2773" y="445.3" width="50" height="2.5" fill="#d4d4d4"/><rect x="2767" y="449.3" width="24" height="2.5" fill="#d4d4d4"/><rect x="2793" y="449.3" width="10" height="2.5" fill="#569cd6"/><rect x="2805" y="449.3" width="32" height="2.5" fill="#d4d4d4"/><rect x="2837" y="449.3" width="4" height="2.5" fill="#b5cea8"/><rect x="2841" y="449.3" width="6" height="2.5" fill="#d4d4d4"/><rect x="2759" y="453.3" width="12" height="2.5" fill="#d4d4d4"/><rect x="2773" y="453.3" width="10" height="2.5" fill="#569cd6"/><rect x="2785" y="453.3" width="10" height="2.5" fill="#d4d4d4"/><rect x="2795" y="453.3" width="18" height="2.5" fill="#ce9178"/><rect x="2815" y="453.3" width="12" height="2.5" fill="#ce9178"/><rect x="2829" y="453.3" width="14" height="2.5" fill="#ce9178"/><rect x="2843" y="453.3" width="4" height="2.5" fill="#d4d4d4"/></g></svg><div style="left:2964px;top:184px;width:28px;height:1408px;background:#1e1e1e;"></div><div style="left:2964px;top:184px;width:1.5px;height:1408px;background:#2c2c2c;"></div><div style="left:2964px;top:191px;width:28px;height:4px;background:#b4b4b4;"></div><div style="left:2964px;top:218px;width:10.5px;height:12px;background:#1b6a90;"></div><div style="left:2964px;top:251px;width:28px;height:478px;background:#464646;"></div><div style="left:2964px;top:278px;width:10.5px;height:13px;background:#3e687f;"></div><div style="left:2964px;top:291px;width:10.5px;height:12px;background:#a3575b;"></div><div style="left:2964px;top:402px;width:10.5px;height:23px;background:#5b7a3d;"></div><div style="left:2964px;top:463px;width:10.5px;height:37px;background:#3e687f;"></div><div style="left:2964px;top:512px;width:10.5px;height:36px;background:#3e687f;"></div><div style="left:2964px;top:561px;width:10.5px;height:85px;background:#3e687f;"></div><div style="left:2964px;top:671px;width:10.5px;height:12.5px;background:#3e687f;"></div><div style="left:2964px;top:742px;width:10.5px;height:309px;background:#1b5f80;"></div><div style="left:600px;top:1592px;width:2392px;height:540px;background:#1e1e1e;"></div><div style="left:600px;top:1592px;width:2392px;height:2px;background:#424242;"></div><svg class="t" style="left:640.5px;top:1608px;color:#969696;" width="118.5" height="40"><text y="27.62" font-size="22" textLength="118.5">PROBLEMS</text></svg><svg class="t" style="left:808.3px;top:1608px;color:#969696;" width="90.7" height="40"><text y="27.62" font-size="22" textLength="90.7">OUTPUT</text></svg><svg class="t" style="left:948.3px;top:1608px;color:#e7e7e7;" width="188.7" height="40"><text y="27.62" font-size="22" textLength="188.7">DEBUG CONSOLE</text></svg><svg class="t" style="left:1186px;top:1608px;color:#969696;" width="110" height="40"><text y="27.62" font-size="22" textLength="110">TERMINAL</text></svg><svg class="t" style="left:1345px;top:1608px;color:#969696;" width="73" height="40"><text y="27.62" font-size="22" textLength="73">PORTS</text></svg><svg class="t" style="left:1467px;top:1608px;color:#969696;" width="176" height="40"><text y="27.62" font-size="22" textLength="176">SPELL CHECKER</text></svg><svg class="t" style="left:1692px;top:1608px;color:#969696;" width="91.7" height="40"><text y="27.62" font-size="22" textLength="91.7">GITLENS</text></svg><div style="left:944px;top:1649px;width:197px;height:2px;background:#e7e7e7;"></div><svg style="left:2749.5px;top:1613.5px;" width="30" height="30" viewBox="0 0 30 30"><circle cx="11.500" cy="11.500" r="10.3" fill="none" stroke="#c5c5c5" stroke-width="2.2" stroke-linecap="round" stroke-linejoin="round" /><path d="M19 19L26.300 26.900" fill="none" stroke="#c5c5c5" stroke-width="2.2" stroke-linecap="round" stroke-linejoin="round" /></svg><svg style="left:2796px;top:1612px;" width="34" height="32" viewBox="0 0 34 32"><path d="M4 3L15.500 14.700M15.500 3L4 14.700M20 9H31M20 13.500H31M8 20H31M8 26H31" fill="none" stroke="#c5c5c5" stroke-width="2" stroke-linecap="round" stroke-linejoin="round" /></svg><svg style="left:2934px;top:1617px;" width="22" height="22" viewBox="0 0 22 22"><path d="M2 2L20 20M20 2L2 20" fill="none" stroke="#c5c5c5" stroke-width="2.2" stroke-linecap="round" stroke-linejoin="round" /></svg><div style="left:600px;top:2098px;width:2392px;height:2px;background:#3a3a3a;"></div><svg style="left:626px;top:2104px;" width="14" height="26" viewBox="0 0 14 26"><path d="M2 2L12 12.500 2 23" fill="none" stroke="#d0d0d0" stroke-width="2.6" stroke-linecap="round" stroke-linejoin="round" /></svg><div style="left:0px;top:70px;width:96px;height:2062px;background:#333333;"></div><div style="left:0px;top:70px;width:4px;height:96px;background:#ffffff;"></div><svg style="left:24px;top:94px;" width="48" height="48" viewBox="0 0 48 48"><path d="M17.500 2.500H30L41.500 14V34Q41.500 37.500 38 37.500H17.500Q14 37.500 14 34V6Q14 2.500 17.500 2.500Z" fill="none" stroke="#ffffff" stroke-width="2.9" stroke-linecap="round" stroke-linejoin="round" /><path d="M29.500 3V11.500Q29.500 15 33 15H41" fill="none" stroke="#ffffff" stroke-width="2.9" stroke-linecap="round" stroke-linejoin="round" /><path d="M8.500 12H5V38.500Q5 45.500 12 45.500H32.500V43" fill="none" stroke="#ffffff" stroke-width="2.9" stroke-linecap="round" stroke-linejoin="round" /></svg><svg style="left:24px;top:190px;" width="48" height="48" viewBox="0 0 48 48"><circle cx="20" cy="19" r="14.5" fill="none" stroke="#858585" stroke-width="2.9" stroke-linecap="round" stroke-linejoin="round" /><path d="M30.5 29.5L44 43" fill="none" stroke="#858585" stroke-width="2.9" stroke-linecap="round" stroke-linejoin="round" /></svg><svg style="left:24px;top:286px;" width="48" height="48" viewBox="0 0 48 48"><circle cx="13.5" cy="7.5" r="5.3" fill="none" stroke="#858585" stroke-width="2.9" stroke-linecap="round" stroke-linejoin="round" /><circle cx="13.5" cy="40" r="5.3" fill="none" stroke="#858585" stroke-width="2.9" stroke-linecap="round" stroke-linejoin="round" /><circle cx="34" cy="17" r="5.3" fill="none" stroke="#858585" stroke-width="2.9" stroke-linecap="round" stroke-linejoin="round" /><path d="M13.5 13V34.5M13.5 31.5H26Q34 31.5 34 23.5V22.5" fill="none" stroke="#858585" stroke-width="2.9" stroke-linecap="round" stroke-linejoin="round" /></svg><div style="left:46px;top:310px;width:33px;height:33px;background:#0078d4;border-radius:50%;"></div><svg style="left:46px;top:310px;" width="33" height="33" viewBox="0 0 33 33"><path d="M8.5 14Q10 8.5 16.5 8.5Q21.5 8.5 24.5 12.5M24.5 19Q23 24.5 16.5 24.5Q11.5 24.5 8.5 20.5" fill="none" stroke="#fff" stroke-width="2.6" stroke-linecap="round" stroke-linejoin="round" /><path d="M25.5 7V13H19.5M7.5 26V20H13.5" fill="none" stroke="#fff" stroke-width="2.6" stroke-linecap="round" stroke-linejoin="round" /></svg><svg style="left:24px;top:382px;" width="48" height="48" viewBox="0 0 48 48"><path d="M12.5 17.500V9.500Q12.5 6 15.500 7.600L41 23.300Q43.500 25.300 41 27L28 34.300" fill="none" stroke="#858585" stroke-width="2.9" stroke-linecap="round" stroke-linejoin="round" /><ellipse cx="12.5" cy="36" rx="6.3" ry="8.300" fill="none" stroke="#858585" stroke-width="2.9" stroke-linecap="round" stroke-linejoin="round" /><path d="M8 28.500Q8 24 12.500 24Q17 24 17 28.500M6 36H1M19 36H24M7 30.500L2.500 27M18 30.500L22.500 27M7.500 42L3 46M17.500 42L22 46" fill="none" stroke="#858585" stroke-width="2.5" stroke-linecap="round" stroke-linejoin="round" /></svg><svg style="left:24px;top:478px;" width="48" height="48" viewBox="0 0 48 48"><path d="M38 17V7.5Q38 4 34.5 4H6.5Q3 4 3 7.5V27.5Q3 31 6.5 31H19M13.5 31V39M8 39H19" fill="none" stroke="#858585" stroke-width="2.9" stroke-linecap="round" stroke-linejoin="round" /><circle cx="35" cy="33.5" r="12.5" fill="#858585"/><path d="M27.5 31.5L32.500 36.5 27.5 41.5M42.5 25.5L37.500 30.5 42.5 35.5" fill="none" stroke="#333" stroke-width="2.4" stroke-linecap="round" stroke-linejoin="round" /></svg><svg style="left:24px;top:574px;" width="48" height="48" viewBox="0 0 48 48"><path d="M4 8H22V44H6.5Q4 44 4 41.5ZM4 26H40V41.5Q40 44 37.5 44H22" fill="none" stroke="#858585" stroke-width="2.9" stroke-linecap="round" stroke-linejoin="round" /><rect x="26.5" y="3" width="15.5" height="15.5" rx="2" transform="rotate(45 34.2 10.8)" fill="none" stroke="#858585" stroke-width="2.9" stroke-linecap="round" stroke-linejoin="round" /></svg><svg style="left:24px;top:670px;" width="48" height="48" viewBox="0 0 48 48"><circle cx="24" cy="24" r="22" fill="none" stroke="#858585" stroke-width="2.9" stroke-linecap="round" stroke-linejoin="round" /><circle cx="20" cy="13" r="4" fill="#858585"/><circle cx="20" cy="36" r="4" fill="#858585"/><circle cx="32" cy="24.5" r="4" fill="#858585"/><path d="M20 13V36M20 13L32 24.5" fill="none" stroke="#858585" stroke-width="2.9" stroke-linecap="round" stroke-linejoin="round" /></svg><svg style="left:24px;top:766px;" width="48" height="48" viewBox="0 0 48 48"><circle cx="24" cy="24" r="22" fill="none" stroke="#858585" stroke-width="2.9" stroke-linecap="round" stroke-linejoin="round" /><circle cx="20" cy="13" r="4" fill="#858585"/><circle cx="20" cy="36" r="4" fill="#858585"/><circle cx="32" cy="24.5" r="4" fill="#858585"/><path d="M20 13V36M20 13L32 24.5" fill="none" stroke="#858585" stroke-width="2.9" stroke-linecap="round" stroke-linejoin="round" /><circle cx="35" cy="35" r="13" fill="#333"/><circle cx="34.5" cy="35" r="8" fill="none" stroke="#858585" stroke-width="3.4" stroke-linecap="round" stroke-linejoin="round" /><path d="M40.5 41L46 46.5" fill="none" stroke="#858585" stroke-width="4" stroke-linecap="round" stroke-linejoin="round" /><circle cx="34.5" cy="35" r="3.4" fill="#858585"/></svg><svg style="left:24px;top:862px;" width="48" height="48" viewBox="0 0 48 48"><path d="M3 13L26 5 45 12V34L22 44 3 37Z" fill="none" stroke="#858585" stroke-width="2.9" stroke-linecap="round" stroke-linejoin="round" /><path d="M3 13L22 20 45 12M22 20V44" fill="none" stroke="#858585" stroke-width="2.9" stroke-linecap="round" stroke-linejoin="round" /><path d="M11 19.5V36.5M27.5 24V37.5M32 22.5V36M36.5 21V34M41 19.5V32" fill="none" stroke="#858585" stroke-width="2.4" stroke-linecap="round" stroke-linejoin="round" /></svg><svg style="left:26.5px;top:1965.5px;" width="43" height="43" viewBox="0 0 48 48"><circle cx="24" cy="24" r="21.5" fill="none" stroke="#858585" stroke-width="2.9" stroke-linecap="round" stroke-linejoin="round" /><circle cx="24" cy="15.5" r="6.5" fill="#858585"/><path d="M11 28.5H37Q37 39 24 39Q11 39 11 28.5Z" fill="#858585"/></svg><svg style="left:26.5px;top:2062.5px;" width="43" height="43" viewBox="0 0 48 48"><path d="M20.3 9.0L20.6 2.8L27.4 2.8L27.7 9.0L32.0 10.7L36.6 6.6L41.4 11.4L37.3 16.0L39.0 20.3L45.2 20.6L45.2 27.4L39.0 27.7L37.3 32.0L41.4 36.6L36.6 41.4L32.0 37.3L27.7 39.0L27.4 45.2L20.6 45.2L20.3 39.0L16.0 37.3L11.4 41.4L6.6 36.6L10.7 32.0L9.0 27.7L2.8 27.4L2.8 20.6L9.0 20.3L10.7 16.0L6.6 11.4L11.4 6.6L16.0 10.7Z" fill="none" stroke="#858585" stroke-width="2.9" stroke-linecap="round" stroke-linejoin="round" /><circle cx="24" cy="24" r="5.8" fill="none" stroke="#858585" stroke-width="2.9" stroke-linecap="round" stroke-linejoin="round" /></svg><div style="left:96px;top:70px;width:504px;height:2062px;background:#252526;"></div><svg class="t" style="left:137px;top:89.5px;color:#bbbbbb;" width="112.4" height="31"><text y="23.12" font-size="22" textLength="112.4">EXPLORER</text></svg><div style="left:543px;top:103px;width:4.4px;height:4.4px;background:#c5c5c5;border-radius:50%;"></div><div style="left:552.4px;top:103px;width:4.4px;height:4.4px;background:#c5c5c5;border-radius:50%;"></div><div style="left:561.8px;top:103px;width:4.4px;height:4.4px;background:#c5c5c5;border-radius:50%;"></div><svg style="left:106px;top:155px;" width="24" height="13" viewBox="0 0 24 13"><path d="M1.5 1.5L12 11.5 22.5 1.5" fill="none" stroke="#c5c5c5" stroke-width="2.4" stroke-linecap="round" stroke-linejoin="round"  /></svg><svg class="t" style="left:137px;top:147px;color:#cccccc;" width="194" height="31"><text y="23.12" font-size="22" textLength="194" font-weight="700">PACKAGES_ALEX</text></svg><svg style="left:400px;top:146px;" width="30" height="34" viewBox="0 0 30 34"><path d="M9 29H5Q2.5 29 2.5 26.5V4Q2.5 1.5 5 1.5H13L20 8.5V13M12.5 2V7Q12.5 9.5 15 9.5H19.5" fill="none" stroke="#c5c5c5" stroke-width="2.2" stroke-linecap="round" stroke-linejoin="round" /><circle cx="19.5" cy="24" r="8.8" fill="#c5c5c5"/><path d="M19.5 19.5V28.5M15 24H24" fill="none" stroke="#252526" stroke-width="2.2" stroke-linecap="round" stroke-linejoin="round" /></svg><svg style="left:445px;top:148px;" width="34" height="32" viewBox="0 0 34 32"><path d="M11 25H5Q2.5 25 2.5 22.5V5Q2.5 2.5 5 2.5H10.5L14 6.5H25Q27.5 6.5 27.5 9V12M2.5 10.5H11L14 6.5" fill="none" stroke="#c5c5c5" stroke-width="2.2" stroke-linecap="round" stroke-linejoin="round" /><circle cx="23" cy="22" r="8.8" fill="#c5c5c5"/><path d="M23 17.5V26.5M18.5 22H27.5" fill="none" stroke="#252526" stroke-width="2.2" stroke-linecap="round" stroke-linejoin="round" /></svg><svg style="left:494px;top:148px;" width="30" height="30" viewBox="0 0 30 30"><path d="M25.5 9.5Q22 3 15 3Q3.5 3 3.5 15Q3.5 26.500 15 26.5Q24.5 26.5 26.3 17.500" fill="none" stroke="#c5c5c5" stroke-width="2.2" stroke-linecap="round" stroke-linejoin="round" /><path d="M26.5 2.5V10H19" fill="none" stroke="#c5c5c5" stroke-width="2.2" stroke-linecap="round" stroke-linejoin="round" /></svg><svg style="left:541px;top:147px;" width="32" height="32" viewBox="0 0 32 32"><rect x="2" y="2" width="24" height="22" rx="4" fill="none" stroke="#c5c5c5" stroke-width="2.2" stroke-linecap="round" stroke-linejoin="round" /><path d="M8.5 13H19.5" fill="none" stroke="#c5c5c5" stroke-width="2.2" stroke-linecap="round" stroke-linejoin="round" /><path d="M7 28.5H24Q30 28.5 30 22.5V8" fill="none" stroke="#c5c5c5" stroke-width="2.2" stroke-linecap="round" stroke-linejoin="round" /></svg><svg style="left:129.5px;top:196.8px;" width="11.05" height="20.4" viewBox="0 0 13 24"><path d="M1.5 1.5L11.5 12 1.5 22.5" fill="none" stroke="#c5c5c5" stroke-width="2.5" stroke-linecap="round" stroke-linejoin="round"  /></svg><svg style="left:156px;top:193px;" width="32" height="27" viewBox="0 0 32 27"><path d="M3 0H12.5Q14 0 15 1.2L17 4.2Q17.6 5 19 5H29Q32 5 32 8V24Q32 27 29 27H3Q0 27 0 24V3Q0 0 3 0Z" fill="#42a5f5"/></svg><svg class="t" style="left:200.6px;top:185px;color:#8c8c8c;" width="75" height="44"><text y="31.01" font-size="26" textLength="75">.agent</text></svg><svg style="left:129.5px;top:240.8px;" width="11.05" height="20.4" viewBox="0 0 13 24"><path d="M1.5 1.5L11.5 12 1.5 22.5" fill="none" stroke="#c5c5c5" stroke-width="2.5" stroke-linecap="round" stroke-linejoin="round"  /></svg><svg style="left:156px;top:237px;" width="32" height="27" viewBox="0 0 32 27"><path d="M3 0H12.5Q14 0 15 1.2L17 4.2Q17.6 5 19 5H29Q32 5 32 8V24Q32 27 29 27H3Q0 27 0 24V3Q0 0 3 0Z" fill="#42a5f5"/></svg><svg class="t" style="left:200.6px;top:229px;color:#8c8c8c;" width="116" height="44"><text y="31.01" font-size="26" textLength="116">.dart_tool</text></svg><svg style="left:129.5px;top:284.8px;" width="11.05" height="20.4" viewBox="0 0 13 24"><path d="M1.5 1.5L11.5 12 1.5 22.5" fill="none" stroke="#c5c5c5" stroke-width="2.5" stroke-linecap="round" stroke-linejoin="round"  /></svg><svg style="left:156px;top:281px;" width="32" height="27" viewBox="0 0 32 27"><path d="M3 0H12.5Q14 0 15 1.2L17 4.2Q17.6 5 19 5H29Q32 5 32 8V24Q32 27 29 27H3Q0 27 0 24V3Q0 0 3 0Z" fill="#42a5f5"/></svg><svg class="t" style="left:200.6px;top:273px;color:#8c8c8c;" width="56.4" height="44"><text y="31.01" font-size="26" textLength="56.4">.idea</text></svg><svg style="left:129.5px;top:328.8px;" width="11.05" height="20.4" viewBox="0 0 13 24"><path d="M1.5 1.5L11.5 12 1.5 22.5" fill="none" stroke="#c5c5c5" stroke-width="2.5" stroke-linecap="round" stroke-linejoin="round"  /></svg><svg style="left:156px;top:325px;" width="32" height="27" viewBox="0 0 32 27"><path d="M3 0H12.5Q14 0 15 1.2L17 4.2Q17.6 5 19 5H29Q32 5 32 8V24Q32 27 29 27H3Q0 27 0 24V3Q0 0 3 0Z" fill="#7fcbac"/><rect x="19.1" y="7.9" width="3.8" height="5" rx="0.8" transform="rotate(0 21 16.5)" fill="#263238"/><rect x="19.1" y="7.9" width="3.8" height="5" rx="0.8" transform="rotate(45 21 16.5)" fill="#263238"/><rect x="19.1" y="7.9" width="3.8" height="5" rx="0.8" transform="rotate(90 21 16.5)" fill="#263238"/><rect x="19.1" y="7.9" width="3.8" height="5" rx="0.8" transform="rotate(135 21 16.5)" fill="#263238"/><rect x="19.1" y="7.9" width="3.8" height="5" rx="0.8" transform="rotate(180 21 16.5)" fill="#263238"/><rect x="19.1" y="7.9" width="3.8" height="5" rx="0.8" transform="rotate(225 21 16.5)" fill="#263238"/><rect x="19.1" y="7.9" width="3.8" height="5" rx="0.8" transform="rotate(270 21 16.5)" fill="#263238"/><rect x="19.1" y="7.9" width="3.8" height="5" rx="0.8" transform="rotate(315 21 16.5)" fill="#263238"/><circle cx="21" cy="16.5" r="6" fill="#263238"/><circle cx="21" cy="16.5" r="2.7" fill="#7fcbac"/></svg><svg class="t" style="left:200.6px;top:317px;color:#8c8c8c;" width="57.3" height="44"><text y="31.01" font-size="26" textLength="57.3">build</text></svg><svg style="left:129.5px;top:372.8px;" width="11.05" height="20.4" viewBox="0 0 13 24"><path d="M1.5 1.5L11.5 12 1.5 22.5" fill="none" stroke="#c5c5c5" stroke-width="2.5" stroke-linecap="round" stroke-linejoin="round"  /></svg><svg style="left:156px;top:369px;" width="32" height="27" viewBox="0 0 32 27"><path d="M3 0H12.5Q14 0 15 1.2L17 4.2Q17.6 5 19 5H29Q32 5 32 8V24Q32 27 29 27H3Q0 27 0 24V3Q0 0 3 0Z" fill="#42a5f5"/></svg><svg class="t" style="left:200.6px;top:361px;color:#cccccc;" width="57.3" height="44"><text y="31.01" font-size="26" textLength="57.3">docs</text></svg><svg style="left:124.5px;top:422px;" width="20.4" height="11.05" viewBox="0 0 24 13"><path d="M1.5 1.5L12 11.5 22.5 1.5" fill="none" stroke="#c5c5c5" stroke-width="2.5" stroke-linecap="round" stroke-linejoin="round"  /></svg><svg style="left:156px;top:413px;" width="32" height="27" viewBox="0 0 32 27"><path d="M3.5 1.5H12Q13.5 1.5 14.3 2.6L16 5.3Q16.7 6.2 18 6.2H28.5Q30.5 6.2 30.5 8.2V23.5Q30.5 25.5 28.5 25.5H3.5Q1.5 25.5 1.5 23.5V3.5Q1.5 1.5 3.5 1.5Z" fill="none" stroke="#42a5f5" stroke-width="3" stroke-linejoin="round"/></svg><svg class="t" style="left:200.6px;top:405px;color:#e2c08d;" width="26.5" height="44"><text y="31.01" font-size="26" textLength="26.5">lib</text></svg><div style="left:550px;top:419.5px;width:15px;height:15px;background:#7a6a52;border-radius:50%;"></div><svg style="left:140.5px;top:466px;" width="20.4" height="11.05" viewBox="0 0 24 13"><path d="M1.5 1.5L12 11.5 22.5 1.5" fill="none" stroke="#c5c5c5" stroke-width="2.5" stroke-linecap="round" stroke-linejoin="round"  /></svg><svg style="left:172px;top:457px;" width="32" height="27" viewBox="0 0 32 27"><path d="M3.5 1.5H12Q13.5 1.5 14.3 2.6L16 5.3Q16.7 6.2 18 6.2H28.5Q30.5 6.2 30.5 8.2V23.5Q30.5 25.5 28.5 25.5H3.5Q1.5 25.5 1.5 23.5V3.5Q1.5 1.5 3.5 1.5Z" fill="none" stroke="#42a5f5" stroke-width="3" stroke-linejoin="round"/></svg><svg class="t" style="left:216.8px;top:449px;color:#e2c08d;" width="143.3" height="44"><text y="31.01" font-size="26" textLength="143.3">mongo-dart</text></svg><div style="left:550px;top:463.5px;width:15px;height:15px;background:#7a6a52;border-radius:50%;"></div><svg style="left:188px;top:498px;" width="32.5" height="32.5" viewBox="0 0 32.5 32.5"><path d="M17.2 0L23.5 5.5 23.4 7.8 7 7.8Z" fill="#01c9b6"/><path d="M7 7.7L0 17.2 6 22.5 7.1 24.8Z" fill="#0a7fc8"/><path d="M7 7.7L23.6 7.7 28.9 27 28.8 28Z" fill="#0175b8"/><path d="M23.5 5.5L32.5 14.7 32.5 26.4 29.3 27.5 28.8 27 23.5 7.7Z" fill="#0aa5e8"/><path d="M7 7.7L7 24.6 27.4 29.1 28.8 27.9Z" fill="#00d2b8"/><path d="M7 24.5L27.4 29 26.4 32.5 14.3 32.5Z" fill="#4ddccb"/></svg><svg class="t" style="left:233px;top:493px;color:#e2c08d;" width="291.4" height="44"><text y="31.01" font-size="26" textLength="291.4">connect_to_db_2_1.dart</text></svg><span style="left:547.5px;top:493px;font-size:24px;line-height:44px;color:#e2c08d;">M</span><svg style="left:188px;top:542px;" width="32.5" height="32.5" viewBox="0 0 32.5 32.5"><path d="M17.2 0L23.5 5.5 23.4 7.8 7 7.8Z" fill="#01c9b6"/><path d="M7 7.7L0 17.2 6 22.5 7.1 24.8Z" fill="#0a7fc8"/><path d="M7 7.7L23.6 7.7 28.9 27 28.8 28Z" fill="#0175b8"/><path d="M23.5 5.5L32.5 14.7 32.5 26.4 29.3 27.5 28.8 27 23.5 7.7Z" fill="#0aa5e8"/><path d="M7 7.7L7 24.6 27.4 29.1 28.8 27.9Z" fill="#00d2b8"/><path d="M7 24.5L27.4 29 26.4 32.5 14.3 32.5Z" fill="#4ddccb"/></svg><svg class="t" style="left:233px;top:537px;color:#e2c08d;" width="300" height="44"><text y="31.01" font-size="26" textLength="300">crud_operations_2_2.d...</text></svg><span style="left:547.5px;top:537px;font-size:24px;line-height:44px;color:#e2c08d;">M</span><svg style="left:188px;top:586px;" width="32.5" height="32.5" viewBox="0 0 32.5 32.5"><path d="M17.2 0L23.5 5.5 23.4 7.8 7 7.8Z" fill="#01c9b6"/><path d="M7 7.7L0 17.2 6 22.5 7.1 24.8Z" fill="#0a7fc8"/><path d="M7 7.7L23.6 7.7 28.9 27 28.8 28Z" fill="#0175b8"/><path d="M23.5 5.5L32.5 14.7 32.5 26.4 29.3 27.5 28.8 27 23.5 7.7Z" fill="#0aa5e8"/><path d="M7 7.7L7 24.6 27.4 29.1 28.8 27.9Z" fill="#00d2b8"/><path d="M7 24.5L27.4 29 26.4 32.5 14.3 32.5Z" fill="#4ddccb"/></svg><svg class="t" style="left:233px;top:581px;color:#e2c08d;" width="246" height="44"><text y="31.01" font-size="26" textLength="246">db_monitor_5_1.dart</text></svg><span style="left:547.5px;top:581px;font-size:24px;line-height:44px;color:#e2c08d;">M</span><svg style="left:145.5px;top:636.8px;" width="11.05" height="20.4" viewBox="0 0 13 24"><path d="M1.5 1.5L11.5 12 1.5 22.5" fill="none" stroke="#c5c5c5" stroke-width="2.5" stroke-linecap="round" stroke-linejoin="round"  /></svg><svg style="left:172px;top:633px;" width="32" height="27" viewBox="0 0 32 27"><path d="M3 0H12.5Q14 0 15 1.2L17 4.2Q17.6 5 19 5H29Q32 5 32 8V24Q32 27 29 27H3Q0 27 0 24V3Q0 0 3 0Z" fill="#42a5f5"/></svg><svg class="t" style="left:216.8px;top:625px;color:#cccccc;" width="72.7" height="44"><text y="31.01" font-size="26" textLength="72.7">mutex</text></svg><svg style="left:145.5px;top:680.8px;" width="11.05" height="20.4" viewBox="0 0 13 24"><path d="M1.5 1.5L11.5 12 1.5 22.5" fill="none" stroke="#c5c5c5" stroke-width="2.5" stroke-linecap="round" stroke-linejoin="round"  /></svg><svg style="left:172px;top:677px;" width="32" height="27" viewBox="0 0 32 27"><path d="M3 0H12.5Q14 0 15 1.2L17 4.2Q17.6 5 19 5H29Q32 5 32 8V24Q32 27 29 27H3Q0 27 0 24V3Q0 0 3 0Z" fill="#42a5f5"/></svg><svg class="t" style="left:216.8px;top:669px;color:#e2c08d;" width="174" height="44"><text y="31.01" font-size="26" textLength="174">openfoodfacts</text></svg><div style="left:550px;top:683.5px;width:15px;height:15px;background:#7a6a52;border-radius:50%;"></div><svg style="left:145.5px;top:724.8px;" width="11.05" height="20.4" viewBox="0 0 13 24"><path d="M1.5 1.5L11.5 12 1.5 22.5" fill="none" stroke="#c5c5c5" stroke-width="2.5" stroke-linecap="round" stroke-linejoin="round"  /></svg><svg style="left:172px;top:721px;" width="32" height="27" viewBox="0 0 32 27"><path d="M3 0H12.5Q14 0 15 1.2L17 4.2Q17.6 5 19 5H29Q32 5 32 8V24Q32 27 29 27H3Q0 27 0 24V3Q0 0 3 0Z" fill="#42a5f5"/></svg><svg class="t" style="left:216.8px;top:713px;color:#cccccc;" width="38.4" height="44"><text y="31.01" font-size="26" textLength="38.4">otp</text></svg><div style="left:96px;top:757px;width:504px;height:44px;background:#04395e;border:2px solid #0078d4;box-sizing:border-box;"></div><svg style="left:145.5px;top:768.8px;" width="11.05" height="20.4" viewBox="0 0 13 24"><path d="M1.5 1.5L11.5 12 1.5 22.5" fill="none" stroke="#ffffff" stroke-width="2.5" stroke-linecap="round" stroke-linejoin="round"  /></svg><svg style="left:172px;top:765px;" width="32" height="27" viewBox="0 0 32 27"><path d="M3 0H12.5Q14 0 15 1.2L17 4.2Q17.6 5 19 5H29Q32 5 32 8V24Q32 27 29 27H3Q0 27 0 24V3Q0 0 3 0Z" fill="#42a5f5"/></svg><svg class="t" style="left:216.8px;top:757px;color:#ffffff;" width="57.3" height="44"><text y="31.01" font-size="26" textLength="57.3">pana</text></svg><div style="left:550px;top:771.5px;width:15px;height:15px;background:#8fa4bd;border-radius:50%;"></div><svg style="left:172px;top:806px;" width="32.5" height="32.5" viewBox="0 0 32.5 32.5"><path d="M17.2 0L23.5 5.5 23.4 7.8 7 7.8Z" fill="#01c9b6"/><path d="M7 7.7L0 17.2 6 22.5 7.1 24.8Z" fill="#0a7fc8"/><path d="M7 7.7L23.6 7.7 28.9 27 28.8 28Z" fill="#0175b8"/><path d="M23.5 5.5L32.5 14.7 32.5 26.4 29.3 27.5 28.8 27 23.5 7.7Z" fill="#0aa5e8"/><path d="M7 7.7L7 24.6 27.4 29.1 28.8 27.9Z" fill="#00d2b8"/><path d="M7 24.5L27.4 29 26.4 32.5 14.3 32.5Z" fill="#4ddccb"/></svg><svg class="t" style="left:216.8px;top:801px;color:#cccccc;" width="112.9" height="44"><text y="31.01" font-size="26" textLength="112.9">main.dart</text></svg><svg style="left:129.5px;top:856.8px;" width="11.05" height="20.4" viewBox="0 0 13 24"><path d="M1.5 1.5L11.5 12 1.5 22.5" fill="none" stroke="#c5c5c5" stroke-width="2.5" stroke-linecap="round" stroke-linejoin="round"  /></svg><svg style="left:156px;top:853px;" width="32" height="27" viewBox="0 0 32 27"><path d="M3 0H12.5Q14 0 15 1.2L17 4.2Q17.6 5 19 5H29Q32 5 32 8V24Q32 27 29 27H3Q0 27 0 24V3Q0 0 3 0Z" fill="#42a5f5"/></svg><svg class="t" style="left:200.6px;top:845px;color:#cccccc;" width="57.3" height="44"><text y="31.01" font-size="26" textLength="57.3">ohos</text></svg><svg style="left:129.5px;top:900.8px;" width="11.05" height="20.4" viewBox="0 0 13 24"><path d="M1.5 1.5L11.5 12 1.5 22.5" fill="none" stroke="#c5c5c5" stroke-width="2.5" stroke-linecap="round" stroke-linejoin="round"  /></svg><svg style="left:156px;top:897px;" width="32" height="27" viewBox="0 0 32 27"><path d="M3 0H12.5Q14 0 15 1.2L17 4.2Q17.6 5 19 5H29Q32 5 32 8V24Q32 27 29 27H3Q0 27 0 24V3Q0 0 3 0Z" fill="#9cb55e"/><path d="M18.6 7.5H24.4M19.8 7.5V13L15.3 21.5Q14.6 23.2 16.4 23.2H26.6Q28.4 23.2 27.7 21.5L23.2 13V7.5" fill="none" stroke="#263238" stroke-width="1.5" stroke-linejoin="round" stroke-linecap="round"/><path d="M18.3 17.5H24.7L27 21.8Q27.3 22.6 26.4 22.6H16.6Q15.7 22.6 16 21.8Z" fill="#263238"/><circle cx="20.5" cy="19.6" r="0.9" fill="#9cb55e"/><circle cx="23" cy="21" r="0.7" fill="#9cb55e"/></svg><svg class="t" style="left:200.6px;top:889px;color:#cccccc;" width="45.4" height="44"><text y="31.01" font-size="26" textLength="45.4">test</text></svg><svg style="left:155.5px;top:938.5px;" width="33" height="33" viewBox="0 0 33 33"><rect x="4.8" y="4.8" width="23.4" height="23.4" rx="2.6" transform="rotate(45 16.5 16.5)" fill="#e64a19"/><path d="M13 8.5L16.5 12V23.5M16.5 13.5L21.5 18.5" fill="none" stroke="#25201f" stroke-width="1.7"/><circle cx="16.5" cy="12.2" r="2.1" fill="#25201f"/><circle cx="16.5" cy="23.3" r="2.1" fill="#25201f"/><circle cx="21.6" cy="18.4" r="2.1" fill="#25201f"/></svg><svg class="t" style="left:200.6px;top:933px;color:#cccccc;" width="113.3" height="44"><text y="31.01" font-size="26" textLength="113.3">.gitignore</text></svg><svg style="left:161px;top:985px;" width="22" height="28" viewBox="0 0 22 28"><path d="M2.5 0H14L22 8V25.5Q22 28 19.5 28H2.5Q0 28 0 25.5V2.5Q0 0 2.5 0Z" fill="#42a5f5"/><path d="M13.2 1.8V7Q13.2 8.8 15 8.8H20.2Z" fill="#252526"/></svg><svg class="t" style="left:200.6px;top:977px;color:#cccccc;" width="120" height="44"><text y="31.01" font-size="26" textLength="120">.metadata</text></svg><span style="left:155.5px;top:1034px;font-size:12.5px;line-height:14px;font-weight:700;color:#f1453d;letter-spacing:-0.6px;transform:scaleY(0.95)">YAML</span><svg class="t" style="left:200.6px;top:1021px;color:#cccccc;" width="261.5" height="44"><text y="31.01" font-size="26" textLength="261.5">analysis_options.yaml</text></svg><svg style="left:156px;top:1077px;" width="32" height="21" viewBox="0 0 32 21"><path d="M9 3.5L2 10.5 9 17.5M23 3.5L30 10.5 23 17.5" fill="none" stroke="#4db6ac" stroke-width="3" stroke-linejoin="miter"/><path d="M18.6 1L13.4 20" stroke="#4db6ac" stroke-width="3"/></svg><svg class="t" style="left:200.6px;top:1065px;color:#8c8c8c;" width="220.5" height="44"><text y="31.01" font-size="26" textLength="220.5">packages_alex.iml</text></svg><svg style="left:161px;top:1117px;" width="22" height="28" viewBox="0 0 22 28"><path d="M2.5 0H14L22 8V25.5Q22 28 19.5 28H2.5Q0 28 0 25.5V2.5Q0 0 2.5 0Z" fill="#42a5f5"/><path d="M13.2 1.8V7Q13.2 8.8 15 8.8H20.2Z" fill="#252526"/></svg><svg class="t" style="left:200.6px;top:1109px;color:#e2c08d;" width="161" height="44"><text y="31.01" font-size="26" textLength="161">pubspec.lock</text></svg><span style="left:547.5px;top:1109px;font-size:24px;line-height:44px;color:#e2c08d;">M</span><span style="left:155.5px;top:1166px;font-size:12.5px;line-height:14px;font-weight:700;color:#f1453d;letter-spacing:-0.6px;transform:scaleY(0.95)">YAML</span><svg class="t" style="left:200.6px;top:1153px;color:#cccccc;" width="165.3" height="44"><text y="31.01" font-size="26" textLength="165.3">pubspec.yaml</text></svg><svg style="left:156px;top:1209px;" width="32" height="20" viewBox="0 0 32 20"><rect x="0" y="0" width="32" height="20" rx="3" fill="#42a5f5"/><path d="M5 15V5.5L9.5 11 14 5.5V15" fill="none" stroke="#252526" stroke-width="2.6" stroke-linejoin="miter"/><path d="M23 5V11" stroke="#252526" stroke-width="2.8"/><path d="M18.3 10.2H27.7L23 15.6Z" fill="#252526"/></svg><svg class="t" style="left:200.6px;top:1197px;color:#cccccc;" width="150.8" height="44"><text y="31.01" font-size="26" textLength="150.8">README.md</text></svg><div style="left:128px;top:449px;width:2px;height:394px;background:#585858;"></div><div style="left:96px;top:2044px;width:504px;height:2px;background:#3c3c3c;"></div><div style="left:96px;top:2088px;width:504px;height:2px;background:#3c3c3c;"></div><svg style="left:110px;top:2055px;" width="13" height="24" viewBox="0 0 13 24"><path d="M1.5 1.5L11.5 12 1.5 22.5" fill="none" stroke="#c5c5c5" stroke-width="2.3" stroke-linecap="round" stroke-linejoin="round"  /></svg><svg class="t" style="left:137px;top:2051.5px;color:#cccccc;" width="98" height="31"><text y="23.12" font-size="22" textLength="98" font-weight="700">OUTLINE</text></svg><svg style="left:110px;top:2099px;" width="13" height="24" viewBox="0 0 13 24"><path d="M1.5 1.5L11.5 12 1.5 22.5" fill="none" stroke="#c5c5c5" stroke-width="2.3" stroke-linecap="round" stroke-linejoin="round"  /></svg><svg class="t" style="left:137px;top:2095.5px;color:#cccccc;" width="105" height="31"><text y="23.12" font-size="22" textLength="105" font-weight="700">TIMELINE</text></svg><div style="left:0px;top:2131.7px;width:2992px;height:45px;background:#007acc;"></div><svg style="left:20px;top:2141px;" width="24" height="26" viewBox="0 0 24 26"><path d="M2 10L9.500 17.5 2 25M22 1L14.5 8.500 22 16" fill="none" stroke="#ffffff" stroke-width="2.3" stroke-linecap="round" stroke-linejoin="round" /></svg><svg style="left:83px;top:2138px;" width="30" height="34" viewBox="0 0 30 34"><circle cx="5.5" cy="5.5" r="3.8" fill="none" stroke="#ffffff" stroke-width="2.1" stroke-linecap="round" stroke-linejoin="round" /><circle cx="5.500" cy="28" r="3.8" fill="none" stroke="#ffffff" stroke-width="2.1" stroke-linecap="round" stroke-linejoin="round" /><circle cx="17" cy="8" r="3.8" fill="none" stroke="#ffffff" stroke-width="2.1" stroke-linecap="round" stroke-linejoin="round" /><path d="M5.5 9.5V24M17 12Q17 17 10 18" fill="none" stroke="#ffffff" stroke-width="2.1" stroke-linecap="round" stroke-linejoin="round" /><circle cx="20" cy="24" r="8" fill="#ffffff"/><path d="M20 19.500V28.5M16 21.800L24 26.200M24 21.800L16 26.200" fill="none" stroke="#007acc" stroke-width="1.6" stroke-linecap="round" stroke-linejoin="round" /></svg><svg class="t" style="left:120px;top:2132px;color:#ffffff;" width="145.3" height="44"><text y="30.32" font-size="24" textLength="145.3">mongo_dart*</text></svg><svg style="left:280px;top:2140px;" width="32" height="30" viewBox="0 0 32 30"><path d="M11 21H8Q2.500 21 2.5 15.500Q2.5 10.500 8 10.500Q9.500 4 16 4Q22 4 23.500 10" fill="none" stroke="#ffffff" stroke-width="2.1" stroke-linecap="round" stroke-linejoin="round" /><circle cx="22" cy="20" r="8.3" fill="#ffffff"/><path d="M22 24.500V15.5M18.300 19L22 15.300 25.700 19" fill="none" stroke="#007acc" stroke-width="1.9" stroke-linecap="round" stroke-linejoin="round" /></svg><svg style="left:343px;top:2138px;" width="30" height="34" viewBox="0 0 30 34"><circle cx="6" cy="5.500" r="3.8" fill="none" stroke="#ffffff" stroke-width="2.1" stroke-linecap="round" stroke-linejoin="round" /><circle cx="6" cy="28" r="3.8" fill="none" stroke="#ffffff" stroke-width="2.1" stroke-linecap="round" stroke-linejoin="round" /><circle cx="23" cy="14" r="3.8" fill="none" stroke="#ffffff" stroke-width="2.1" stroke-linecap="round" stroke-linejoin="round" /><path d="M6 9.500V24M14.500 3V31M23 18Q23 25 14.500 27" fill="none" stroke="#ffffff" stroke-width="2.1" stroke-linecap="round" stroke-linejoin="round" /></svg><svg style="left:410px;top:2140px;" width="28" height="28" viewBox="0 0 28 28"><path d="M9 14Q12 4 24.500 2.500Q23.500 15 13.500 18.500ZM9 14L4 14.500 8.500 9.500 12 9.500M13.500 18.500L13 23.500 18 19 18.500 15.500M5 19L2 26 8.500 22.500" fill="none" stroke="#ffffff" stroke-width="1.9" stroke-linecap="round" stroke-linejoin="round" /><circle cx="17.500" cy="9.500" r="2.3" fill="none" stroke="#ffffff" stroke-width="1.8" stroke-linecap="round" stroke-linejoin="round" /></svg><svg style="left:441px;top:2139px;" width="30" height="30" viewBox="0 0 30 30"><path d="M10.500 12.500L17.500 19.500Q13.500 24 9.500 21.500L6.500 24.500 3 28M10.500 12.500Q6.500 16.500 9 20.500M13 10L20 17Q24.500 13 22 9L28 2.500M13 10Q17 6 21 8.500" fill="none" stroke="#ffffff" stroke-width="1.9" stroke-linecap="round" stroke-linejoin="round" /></svg><svg class="t" style="left:478.7px;top:2132px;color:#ffffff;" width="122.7" height="44"><text y="30.32" font-size="24" textLength="122.7">Launchpad</text></svg><svg style="left:636px;top:2140px;" width="29" height="29" viewBox="0 0 29 29"><circle cx="14.500" cy="14.500" r="12.3" fill="none" stroke="#ffffff" stroke-width="2.1" stroke-linecap="round" stroke-linejoin="round" /><path d="M9.500 9.500L19.500 19.500M19.500 9.500L9.500 19.500" fill="none" stroke="#ffffff" stroke-width="2.1" stroke-linecap="round" stroke-linejoin="round" /></svg><span style="left:674px;top:2132px;font-size:24px;line-height:44px;color:#ffffff;">0</span><svg style="left:695px;top:2140px;" width="31" height="29" viewBox="0 0 31 29"><path d="M15.500 2.500L29 26.500H2Z" fill="none" stroke="#ffffff" stroke-width="2.1" stroke-linecap="round" stroke-linejoin="round" /><path d="M15.500 11V19" fill="none" stroke="#ffffff" stroke-width="2.3" stroke-linecap="round" stroke-linejoin="round" /><circle cx="15.500" cy="22.800" r="1.500" fill="#ffffff"/></svg><span style="left:734.5px;top:2132px;font-size:24px;line-height:44px;color:#ffffff;">0</span><svg style="left:2049px;top:2137px;" width="22" height="34" viewBox="0 0 22 34"><circle cx="11" cy="17" r="6.3" fill="none" stroke="#ffffff" stroke-width="2.2" stroke-linecap="round" stroke-linejoin="round" /><path d="M11 2V10.500M11 23.500V32" fill="none" stroke="#ffffff" stroke-width="2.2" stroke-linecap="round" stroke-linejoin="round" /></svg><svg class="t" style="left:2082.8px;top:2132px;color:#ffffff;" width="177" height="44"><text y="30.32" font-size="24" textLength="177">You, 1 hour ago</text></svg><svg class="t" style="left:2292.5px;top:2132px;color:#ffffff;" width="120.8" height="44"><text y="30.32" font-size="24" textLength="120.8">Ln 1, Col 1</text></svg><svg class="t" style="left:2447.5px;top:2132px;color:#ffffff;" width="110.4" height="44"><text y="30.32" font-size="24" textLength="110.4">Spaces: 2</text></svg><svg class="t" style="left:2591px;top:2132px;color:#ffffff;" width="72" height="44"><text y="30.32" font-size="24" textLength="72">UTF-8</text></svg><svg class="t" style="left:2696px;top:2132px;color:#ffffff;" width="26.4" height="44"><text y="30.32" font-size="24" textLength="26.4">LF</text></svg><svg class="t" style="left:2758px;top:2131px;color:#ffffff;" width="26" height="44"><text y="30.32" font-size="24" textLength="26">{ }</text></svg><svg class="t" style="left:2799.6px;top:2132px;color:#ffffff;" width="47.4" height="44"><text y="30.32" font-size="24" textLength="47.4">Dart</text></svg><svg style="left:2879px;top:2139px;" width="34" height="30" viewBox="0 0 34 30"><path d="M1 20Q1 15 6 13L28 13Q33 15 33 20Q33 24 28 26.500Q22 29.500 17 29.500Q12 29.500 6 26.500Q1 24 1 20Z" fill="#ffffff"/><path d="M7 13.500H27V22.500Q22 25.700 17 25.700Q12 25.700 7 22.500Z" fill="#007acc"/><rect x="12.2" y="16.500" width="2.7" height="6.500" rx="1.3" fill="#ffffff"/><rect x="19.2" y="16.500" width="2.7" height="6.500" rx="1.3" fill="#ffffff"/><ellipse cx="10.6" cy="7.800" rx="5.6" ry="5.300" fill="#007acc" stroke="#ffffff" stroke-width="2.4"/><ellipse cx="23" cy="7.800" rx="5.6" ry="5.300" fill="#007acc" stroke="#ffffff" stroke-width="2.4"/></svg><svg style="left:2946px;top:2139px;" width="28" height="30" viewBox="0 0 28 30"><path d="M14 2Q22.500 2 22.500 12V19.500L25.500 24.500H2.500L5.500 19.500V12Q5.500 2 14 2Z" fill="none" stroke="#ffffff" stroke-width="2.2" stroke-linecap="round" stroke-linejoin="round" /><path d="M10.500 25Q11 28.500 14 28.500Q17 28.500 17.500 25" fill="none" stroke="#ffffff" stroke-width="2.2" stroke-linecap="round" stroke-linejoin="round" /></svg><div id="wbd"></div><div id="wtop"></div></div><div class="ov" style="left:0;top:0;width:2992px;height:2176px"><div style="left:2818px;top:429.5px;width:126.3px;height:1316px;background:#ffffff;border-radius:17px;box-shadow:0 0 0 5px rgba(50,50,50,0.6),0 0 0 12px rgba(40,40,40,0.5),0 0 0 13.5px rgba(0,0,0,0.3);"></div><div style="left:2840.5px;top:460px;width:19px;height:5px;background:#191919;border-radius:2px;"></div><svg style="left:2895px;top:447px;" width="28" height="28" viewBox="0 0 28 28"><path d="M2.500 2.500L25.500 25.500M25.500 2.500L2.500 25.500" fill="none" stroke="#191919" stroke-width="3.2" stroke-linecap="round" stroke-linejoin="round" /></svg><svg style="left:2846px;top:504px;" width="60" height="60" viewBox="-30.0 -30.0 60 60"><path d="M-17 -14H17M-17 0H17M-17 14.400H17" fill="none" stroke="#191919" stroke-width="3.2" stroke-linecap="round" stroke-linejoin="round" /></svg><div style="left:2834px;top:573.6px;width:84px;height:2px;background:#e3e3e3;"></div><svg style="left:2846px;top:598px;" width="60" height="60" viewBox="-30.0 -30.0 60 60"><path d="M-10 -18H19M0 -10V18.500M0 -10L-12 1M4 -6L9 -1" fill="none" stroke="#191919" stroke-width="3.2" stroke-linecap="round" stroke-linejoin="round" /><path d="M-19.500 -19L19.500 19.500" fill="none" stroke="#191919" stroke-width="3.2" stroke-linecap="round" stroke-linejoin="round" /></svg><svg style="left:2846px;top:702px;" width="60" height="60" viewBox="-30.0 -30.0 60 60"><path d="M-11.200 -19V6.500Q-11.200 10.600 -7.200 10.600H19M-19.500 -11.200H7.700Q11.700 -11.200 11.700 -7.200V19" fill="none" stroke="#191919" stroke-width="3.2" stroke-linecap="round" stroke-linejoin="round" /></svg><svg style="left:2846px;top:806.3px;" width="60" height="60" viewBox="-30.0 -30.0 60 60"><path d="M-14.600 12.800A19.500 19.500 0 1 0 -19 -4.500" fill="none" stroke="#191919" stroke-width="3.2" stroke-linecap="round" stroke-linejoin="round" /><path d="M-20 -11L-19 -1.500 -11 -7Z" fill="#191919" stroke="#191919" stroke-width="1.5" stroke-linejoin="round"/><rect x="-7" y="-6.500" width="14" height="13.500" rx="3" fill="none" stroke="#191919" stroke-width="3.2" stroke-linecap="round" stroke-linejoin="round" /></svg><svg style="left:2846px;top:909.8px;" width="60" height="60" viewBox="-30.0 -30.0 60 60"><path d="M14.600 12.800A19.500 19.500 0 1 1 19 -4.500" fill="none" stroke="#191919" stroke-width="3.2" stroke-linecap="round" stroke-linejoin="round" /><path d="M20 -11L19 -1.500 11 -7Z" fill="#191919" stroke="#191919" stroke-width="1.5" stroke-linejoin="round"/><rect x="-7" y="-6.500" width="14" height="13.500" rx="3" fill="none" stroke="#191919" stroke-width="3.2" stroke-linecap="round" stroke-linejoin="round" /></svg><svg style="left:2846px;top:1014.5px;" width="60" height="60" viewBox="-30.0 -30.0 60 60"><path d="M-10 -7.500H-17.500Q-20.500 -7.500 -20.500 -4.500V4.500Q-20.500 7.500 -17.500 7.500H-15M-10 -7.500L-1.500 -14.500Q1.500 -16.500 1.500 -13V13Q1.500 16.500 -1.500 14.500L-9.500 8" fill="none" stroke="#191919" stroke-width="3.2" stroke-linecap="round" stroke-linejoin="round" /><path d="M7 0H21M14 -7V7" fill="none" stroke="#191919" stroke-width="3.2" stroke-linecap="round" stroke-linejoin="round" /></svg><svg style="left:2846px;top:1118px;" width="60" height="60" viewBox="-30.0 -30.0 60 60"><path d="M-10 -7.500H-17.500Q-20.500 -7.500 -20.500 -4.500V4.500Q-20.500 7.500 -17.500 7.500H-15M-10 -7.500L-1.500 -14.500Q1.500 -16.500 1.500 -13V13Q1.500 16.500 -1.500 14.500L-9.500 8" fill="none" stroke="#191919" stroke-width="3.2" stroke-linecap="round" stroke-linejoin="round" /><path d="M7 0H21" fill="none" stroke="#191919" stroke-width="3.2" stroke-linecap="round" stroke-linejoin="round" /></svg><svg style="left:2846px;top:1222px;" width="60" height="60" viewBox="-30.0 -30.0 60 60"><rect x="-9.500" y="-18" width="19" height="36" rx="4" transform="rotate(14)" fill="none" stroke="#191919" stroke-width="3.2" stroke-linecap="round" stroke-linejoin="round" /><path d="M-4 12.500L3 14" fill="none" stroke="#191919" stroke-width="3" stroke-linecap="round" stroke-linejoin="round" /><path d="M-16.500 -8Q-21 3 -16 12M16.500 8Q21 -3 16 -12" fill="none" stroke="#191919" stroke-width="3" stroke-linecap="round" stroke-linejoin="round" /></svg><div style="left:2834px;top:1381.6px;width:84px;height:2px;background:#e3e3e3;"></div><svg style="left:2846px;top:1407.5px;" width="60" height="60" viewBox="-30.0 -30.0 60 60"><path d="M13.500 -15.500V15.500Q13.500 18 11 16.800L-14 2Q-16 0 -14 -2L11 -16.800Q13.500 -18 13.500 -15.500Z" fill="none" stroke="#191919" stroke-width="3.2" stroke-linecap="round" stroke-linejoin="round" /></svg><svg style="left:2846px;top:1512px;" width="60" height="60" viewBox="-30.0 -30.0 60 60"><circle cx="0" cy="0" r="17.500" fill="none" stroke="#191919" stroke-width="3.2" stroke-linecap="round" stroke-linejoin="round" /></svg><svg style="left:2846px;top:1616.5px;" width="60" height="60" viewBox="-30.0 -30.0 60 60"><rect x="-15.500" y="-15.500" width="31" height="31" rx="7" fill="none" stroke="#191919" stroke-width="3.2" stroke-linecap="round" stroke-linejoin="round" /></svg><div style="left:1822px;top:71px;width:942px;height:2033px;border-radius:120px;box-shadow:0 0 12px 1px rgba(0,0,0,0.4);"></div><div style="left:1822px;top:71px;width:942px;height:2033px;background:linear-gradient(#3e3e3e 0,#3e3e3e 69.35%,#a8a090 70.55%,#a8a090 100%);border-radius:120px;"></div><div style="left:1826px;top:74px;width:934px;height:2027px;background:linear-gradient(#858585 0,#858585 69.40%,#e6e0d4 70.60%,#e6e0d4 100%);border-radius:117px;"></div><div style="left:1829px;top:77.6px;width:928px;height:2018.4px;background:linear-gradient(#111 0,#161616 1.5%,#444 6%,#444 69.52%,#ada594 70.72%,#a89e8c 100%);border-radius:114px;"></div><div style="left:1832px;top:81.6px;width:922px;height:2012px;background:linear-gradient(#bebebe 0,#bcbcbc 0.35%,#8c8c8c 1.4%,#8e8e8e 4.5%,#c4c4c4 9%,#c6c6c6 92%,#b9bcbc 99%,#86867e 99.5%);border-radius:111px;"></div><div style="left:1838.5px;top:86.5px;width:910.5px;height:2004.7px;background:linear-gradient(#a6a6a6 0,#5a5a5a 5px,#000 10.5px,#000 calc(100% - 13.4px),#6a6a6a calc(100% - 7px),#c2c6c6 100%);border-radius:104px;"></div><div style="left:1840px;top:110px;width:908px;height:1962px;background:#fdf6fe;border-radius:88px;overflow:hidden;box-shadow:inset 0 0 5px 1px rgba(0,0,0,0.35)"><div style="left:682.5px;top:40.5px;width:340px;height:30px;background:#bf414e;transform:rotate(45deg);box-shadow:0 4px 10px 2px rgba(0,0,0,0.35)"></div><span style="left:791px;top:41px;width:120px;height:30px;line-height:30px;text-align:center;font-size:23px;font-weight:700;color:#fff;letter-spacing:0.5px;transform:rotate(45deg)">DEBUG</span></div><svg class="t" style="left:1868px;top:139px;color:#000;" width="90" height="44"><text y="33.95" font-size="34.5" textLength="90" style="stroke-width:1.1px">05:25</text></svg><div style="left:2196.5px;top:139.1px;width:51px;height:51px;border-radius:50%;background:radial-gradient(circle at 55% 45%,#0b0b0b 0,#000 70%);box-shadow:0 0 2px 1px rgba(0,0,0,0.6);"></div><div style="left:2269.1px;top:139.1px;width:51px;height:51px;border-radius:50%;background:radial-gradient(circle at 55% 45%,#0b0b0b 0,#000 70%);box-shadow:0 0 2px 1px rgba(0,0,0,0.6);"></div><div style="left:2341.9px;top:139.1px;width:51px;height:51px;border-radius:50%;background:radial-gradient(circle at 55% 45%,#0b0b0b 0,#000 70%);box-shadow:0 0 2px 1px rgba(0,0,0,0.6);"></div><div style="left:2218px;top:154.6px;width:10px;height:10px;border-radius:50%;background:radial-gradient(circle,#2f86b8 0,#0e3a5a 55%,transparent 75%);"></div><div style="left:2223px;top:162.6px;width:7px;height:7px;border-radius:50%;background:radial-gradient(circle,#1e6c98 0,#0a2c48 55%,transparent 75%);"></div><div style="left:2363.4px;top:154.6px;width:10px;height:10px;border-radius:50%;background:radial-gradient(circle,#2f86b8 0,#0e3a5a 55%,transparent 75%);"></div><div style="left:2368.4px;top:162.6px;width:7px;height:7px;border-radius:50%;background:radial-gradient(circle,#1e6c98 0,#0a2c48 55%,transparent 75%);"></div><svg style="left:2623px;top:148px;" width="22" height="28" viewBox="0 0 22 28"><path d="M3 0H14L22 8V25Q22 28 19 28H3Q0 28 0 25V3Q0 0 3 0Z" fill="#000"/><rect x="9" y="7.500" width="4" height="10" rx="1.5" fill="#fff"/><circle cx="11" cy="21.500" r="2.3" fill="#fff"/></svg><div style="left:2656px;top:148px;width:54px;height:28px;border:3px solid #000;border-radius:8.5px;box-sizing:border-box;background:rgba(150,150,150,0.35);"></div><svg class="t" style="left:2662.5px;top:148.5px;color:#000;" width="41" height="28"><text y="22.66" font-size="25" textLength="41" style="stroke-width:1px">100</text></svg><div style="left:2713.5px;top:155.5px;width:3.5px;height:13px;background:#000;border-radius:0 2px 2px 0;"></div><svg style="left:1886px;top:247px;" width="40" height="40" viewBox="0 0 40 40"><path d="M19 2.500L2.500 19.500 19 36.500M3.500 19.500H38" fill="none" stroke="#1d1b20" stroke-width="4.2"/></svg><svg class="t" style="left:2009px;top:229.5px;color:#1d1b20;" width="66.5" height="70"><text y="52.88" font-size="51.6" textLength="66.5">2.1</text></svg><svg class="t" style="left:2092.3px;top:231.51px;color:#1d1b20;" width="216.72" height="67.08"><text y="51.6" font-size="51.6" textLength="206.4" font-family="'Liberation Sans','Noto Sans CJK SC',sans-serif">建立连接</text></svg><span style="left:2313px;top:227px;font-size:51.6px;line-height:70px;color:#1d1b20;">(</span><svg class="t" style="left:2331px;top:231.51px;color:#1d1b20;" width="268.32" height="67.08"><text y="51.6" font-size="51.6" textLength="258" font-family="'Liberation Sans','Noto Sans CJK SC',sans-serif">匿名调试版</text></svg><span style="left:2589px;top:227px;font-size:51.6px;line-height:70px;color:#1d1b20;">)</span><div style="left:1888px;top:380px;width:811px;height:129.5px;border:2.3px solid #79747e;border-radius:10px;box-sizing:border-box;"></div><div style="left:1906.5px;top:376px;width:458px;height:8px;background:#fdf6fe;"></div><svg class="t" style="left:1917px;top:361.08px;color:#49454f;" width="91.12" height="36.53"><text y="28.1" font-size="28.1" textLength="85.5" font-family="'Liberation Sans','Noto Sans CJK SC',sans-serif">宿主机</text></svg><svg class="t" style="left:2011px;top:359.5px;color:#49454f;" width="25" height="40"><text y="29.74" font-size="28.1" textLength="25">IP</text></svg><span style="left:2044.5px;top:358.5px;font-size:28.1px;line-height:40px;color:#49454f;">(</span><svg class="t" style="left:2054.5px;top:361.08px;color:#49454f;" width="176.62" height="36.53"><text y="28.1" font-size="28.1" textLength="171" font-family="'Liberation Sans','Noto Sans CJK SC',sans-serif">模拟器通常为</text></svg><svg class="t" style="left:2239px;top:359.5px;color:#49454f;" width="115" height="40"><text y="29.74" font-size="28.1" textLength="115">10.0.2.2)</text></svg><svg class="t" style="left:1918px;top:417.5px;color:#1d1b20;" width="137" height="50"><text y="37.99" font-size="37.5" textLength="137">10.0.2.2</text></svg><svg style="left:2172.8px;top:563.8px;" width="41.2" height="40.7" viewBox="0 0 24 24"><defs><linearGradient id="gck2" x1="0" y1="0" x2="0" y2="1"><stop offset="0" stop-color="#02d934"/><stop offset="1" stop-color="#0a9a4e"/></linearGradient></defs><rect x="0" y="0" width="24" height="24" rx="5" fill="url(#gck2)"/><path d="M5.300 12.600L10 17.200 18.700 7.400" fill="none" stroke="#fff" stroke-width="3.4" stroke-linecap="round" stroke-linejoin="round"/></svg><svg class="t" style="left:2229px;top:560.25px;color:#1d1b20;" width="160.7" height="48.75"><text y="37.5" font-size="37.5" textLength="153.2" font-family="'Liberation Sans','Noto Sans CJK SC',sans-serif">连接成功</text></svg><span style="left:2383px;top:559px;font-size:37.5px;line-height:50px;color:#1d1b20;">!</span><svg class="t" style="left:2060px;top:613.25px;color:#1d1b20;" width="199" height="48.75"><text y="37.5" font-size="37.5" textLength="191.5" font-family="'Liberation Sans','Noto Sans CJK SC',sans-serif">容器主机名</text></svg><span style="left:2251px;top:613px;font-size:37.5px;line-height:50px;color:#1d1b20;">:</span><svg class="t" style="left:2271.4px;top:612.5px;color:#1d1b20;" width="255.5" height="50"><text y="37.99" font-size="37.5" textLength="255.5">cbe1c1662920</text></svg><svg class="t" style="left:2146px;top:667.25px;color:#1d1b20;" width="199" height="48.75"><text y="37.5" font-size="37.5" textLength="191.5" font-family="'Liberation Sans','Noto Sans CJK SC',sans-serif">数据库版本</text></svg><span style="left:2336.5px;top:667px;font-size:37.5px;line-height:50px;color:#1d1b20;">:</span><svg class="t" style="left:2358px;top:666.5px;color:#1d1b20;" width="82" height="50"><text y="37.99" font-size="37.5" textLength="82">8.2.5</text></svg><svg class="t" style="left:2009px;top:721.95px;color:#1d1b20;" width="84.1" height="48.75"><text y="37.5" font-size="37.5" textLength="76.6" font-family="'Liberation Sans','Noto Sans CJK SC',sans-serif">状态</text></svg><span style="left:2089px;top:722px;font-size:37.5px;line-height:50px;color:#1d1b20;">:</span><svg class="t" style="left:2122.5px;top:721.95px;color:#1d1b20;" width="199" height="48.75"><text y="37.5" font-size="37.5" textLength="191.5" font-family="'Liberation Sans','Noto Sans CJK SC',sans-serif">未开启鉴权</text></svg><span style="left:2323.5px;top:719.5px;font-size:37.5px;line-height:50px;color:#1d1b20;">(</span><svg class="t" style="left:2338px;top:721.95px;color:#1d1b20;" width="237.3" height="48.75"><text y="37.5" font-size="37.5" textLength="229.8" font-family="'Liberation Sans','Noto Sans CJK SC',sans-serif">匿名访问成功</text></svg><span style="left:2566.3px;top:719.5px;font-size:37.5px;line-height:50px;color:#1d1b20;">)</span><div style="left:1887px;top:828.5px;width:814px;height:117.5px;background:#f9f1fa;border-radius:60px;box-shadow:0 2px 3.5px rgba(0,0,0,0.2),0 1px 1.5px rgba(0,0,0,0.12);"></div><svg class="t" style="left:2114.5px;top:867.16px;color:#65558f;" width="140.16" height="42.64"><text y="32.8" font-size="32.8" textLength="133.6" font-weight="500" font-family="'Liberation Sans','Noto Sans CJK SC',sans-serif">连接本地</text></svg><svg class="t" style="left:2257px;top:865.5px;color:#65558f;" width="106.4" height="46"><text y="34.37" font-size="32.8" textLength="106.4" style="stroke-width:0.7px">Docker</text></svg><svg class="t" style="left:2373.5px;top:867.16px;color:#65558f;" width="106.76" height="42.64"><text y="32.8" font-size="32.8" textLength="100.2" font-weight="500" font-family="'Liberation Sans','Noto Sans CJK SC',sans-serif">数据库</text></svg><div style="left:2162.5px;top:2046.7px;width:263px;height:11.5px;background:#b4acb6;border-radius:6px;"></div></div></div></body></html>
